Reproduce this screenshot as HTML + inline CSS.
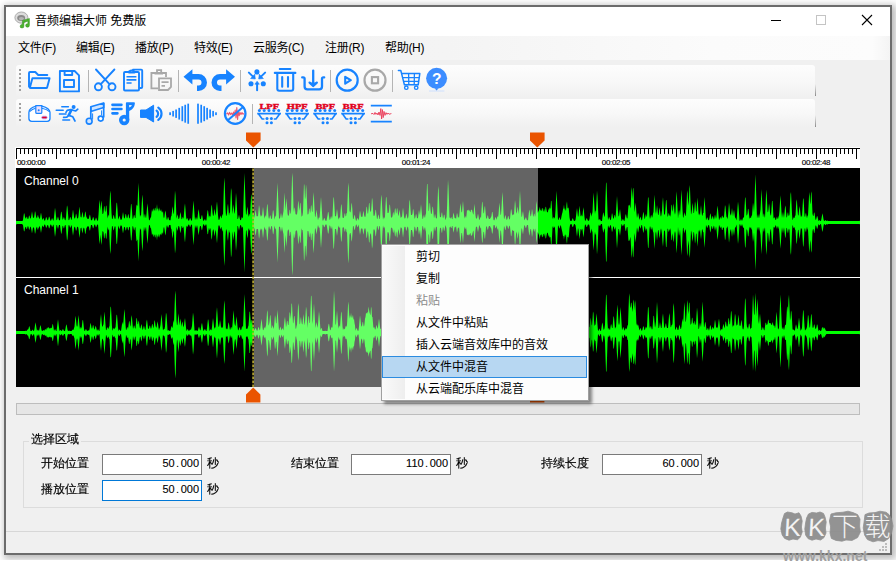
<!DOCTYPE html>
<html lang="zh-CN">
<head>
<meta charset="utf-8">
<title>音频编辑大师 免费版</title>
<style>
html,body{margin:0;padding:0}
body{width:896px;height:563px;overflow:hidden;background:#fff;position:relative;font-family:"Liberation Sans","Noto Sans CJK SC",sans-serif;font-size:12px;color:#000;line-height:1}
.abs{position:absolute;display:block}
.win{left:4px;top:5px;width:888px;height:550px;box-sizing:border-box;border:2px solid #6c6c6c;background:#f0f0f0;box-shadow:2px 2px 7px 2px rgba(0,0,0,.27)}
.title{left:6px;top:7px;width:884px;height:29px;background:#fff}
.ttext{left:35px;top:13px;height:16px;line-height:16px;white-space:nowrap}
.menubar{left:6px;top:36px;width:884px;height:24px;background:linear-gradient(to right,#f1f1f1 0,#f4f4f4 50%,#fbfbfb 80%,#fcfcfc 98%,#f4f4f4 100%)}
.mi{top:40px;height:16px;line-height:16px;white-space:nowrap;letter-spacing:-0.3px}
.tb{left:16px;width:799px;border-radius:3px;background:linear-gradient(to bottom,#fdfdfd 0,#f8f8f8 50%,#f0f0f0 100%)}
.ruler{left:15px;top:147px;width:845px;height:21px;background:#fff}
.ticks{left:16px;top:148px;width:841px;background-repeat:repeat-x}
.rl{top:158px;width:40px;margin-left:-20px;text-align:center;font-size:8px;line-height:10px;letter-spacing:-0.35px;color:#000;white-space:nowrap;-webkit-text-stroke:0.15px #000}
.sb{left:16px;top:403px;width:844px;height:12px;box-sizing:border-box;border:1px solid #bdbdbd;background:#e6e6e6}
.menu{left:381px;top:244px;width:208px;height:157px;box-sizing:border-box;border:1px solid #a0a0a0;background:#fdfdfd;box-shadow:3px 3px 3px rgba(0,0,0,.45)}
.gut{left:0px;top:1px;width:23px;height:153px;background:linear-gradient(to right,#fafafa,#eeeeee)}
.it{left:34px;height:22px;line-height:22px;white-space:nowrap}
.hl{left:0px;top:111px;width:205px;height:22px;box-sizing:border-box;border:1px solid #2b8be0;background:#b7d7f2}
.grp{left:23px;top:441px;width:840px;height:67px;box-sizing:border-box;border:1px solid #dcdcdc}
.sim{font-family:"Liberation Sans","WenQuanYi Zen Hei","Noto Sans CJK SC",sans-serif;font-size:12px;line-height:14px;white-space:nowrap;-webkit-text-stroke:0.18px #000}
.inp{width:100px;height:21px;box-sizing:border-box;border:1px solid #7a7a7a;background:#fff;text-align:right;padding-right:2px;font-family:"Liberation Sans",sans-serif;font-size:11px;line-height:17px;white-space:nowrap;-webkit-text-stroke:0.1px #000}
.inp i{display:inline-block;width:6px;text-align:center;font-style:normal}
.inp.f{border-color:#0078d7}
.stl{left:6px;top:531px;width:884px;height:1px;background:#d7d7d7}
.wm{color:#fff;font-family:"Liberation Sans","Noto Sans CJK SC",sans-serif;font-weight:bold;white-space:nowrap}
</style>
</head>
<body>
<div class="abs win"></div>
<div class="abs" style="left:0;top:560px;width:896px;height:3px;background:#fff"></div>
<div class="abs title"></div>
<div class="abs ttext">音频编辑大师 免费版</div>
<div class="abs menubar"></div>
<div class="abs mi" style="left:18px">文件(F)</div>
<div class="abs mi" style="left:76px">编辑(E)</div>
<div class="abs mi" style="left:135px">播放(P)</div>
<div class="abs mi" style="left:194px">特效(E)</div>
<div class="abs mi" style="left:253px">云服务(C)</div>
<div class="abs mi" style="left:325px">注册(R)</div>
<div class="abs mi" style="left:385px">帮助(H)</div>
<div class="abs tb" style="top:65px;height:32px"></div>
<div class="abs tb" style="top:99px;height:28px"></div>
<div class="abs" style="left:815px;top:84px;width:1px;height:12px;background:linear-gradient(to bottom,rgba(130,130,130,0),#8a8a8a)"></div>
<div class="abs" style="left:815px;top:115px;width:1px;height:12px;background:linear-gradient(to bottom,rgba(130,130,130,0),#8a8a8a)"></div>
<div class="abs ruler"></div>
<div class="abs" style="left:16px;top:148px;width:844px;height:1px;background:#000"></div>
<div class="abs ticks" style="height:6px;background-image:repeating-linear-gradient(to right,#000 0,#000 1px,transparent 1px,transparent 4px)"></div>
<div class="abs ticks" style="height:9px;background-image:repeating-linear-gradient(to right,#000 0,#000 1px,transparent 1px,transparent 20px)"></div>
<div class="abs ticks" style="height:11px;background-image:repeating-linear-gradient(to right,#000 0,#000 1px,transparent 1px,transparent 40px)"></div>
<div class="abs rl" style="left:31px;margin-left:-14px;text-align:left">00:00:00</div>
<div class="abs rl" style="left:216px">00:00:42</div>
<div class="abs rl" style="left:416px">00:01:24</div>
<div class="abs rl" style="left:616px">00:02:05</div>
<div class="abs rl" style="left:816px">00:02:48</div>
<svg class="abs" style="left:16px;top:168px" width="844" height="219" viewBox="0 0 844 219">
<rect x="0" y="0" width="844" height="219" fill="#000"/>
<rect x="238" y="0" width="284" height="219" fill="#646464"/>
<path fill="#00ff00" d="M0.0,52.5 0.5,53.1 6.0,53.1 6.5,52.9 7.0,52.0 7.5,48.3 8.0,45.2 8.5,45.7 9.0,49.0 9.5,50.2 10.0,50.7 10.5,48.7 11.0,48.7 11.5,50.8 12.0,51.2 12.5,50.2 13.0,47.8 13.5,47.5 14.0,49.9 14.5,50.8 15.0,49.4 15.5,46.5 16.0,43.2 16.5,46.3 17.0,49.7 18.0,49.7 18.5,46.7 19.0,42.9 19.5,44.5 20.0,48.4 20.5,49.7 21.0,50.6 21.5,48.0 22.0,46.8 22.5,49.2 23.0,49.6 23.5,51.1 24.0,50.4 24.5,47.3 25.0,44.4 25.5,47.3 26.0,50.6 26.5,52.1 27.0,50.5 27.5,50.0 28.0,51.5 28.5,52.8 29.0,52.8 29.5,51.2 30.0,49.3 30.5,49.2 31.0,51.0 31.5,52.2 32.0,52.2 32.5,50.6 33.0,48.6 33.5,49.0 34.0,51.0 34.5,52.8 35.0,52.8 35.5,51.5 36.0,50.0 36.5,50.7 37.0,52.2 37.5,52.8 38.0,49.2 38.5,44.2 39.0,39.7 39.5,43.0 40.0,47.9 40.5,52.2 41.0,52.1 41.5,50.1 42.0,48.4 42.5,50.2 43.0,52.2 43.5,52.2 44.0,52.2 44.5,48.1 45.0,44.3 45.5,43.4 46.0,47.1 46.5,51.4 47.0,51.6 47.5,49.7 48.0,49.0 48.5,50.8 49.0,52.2 49.5,52.2 50.0,49.5 50.5,43.0 51.0,37.3 51.5,39.0 52.0,44.9 52.5,52.0 53.0,52.2 53.5,51.2 54.0,49.3 54.5,49.0 55.0,50.9 55.5,52.2 56.0,49.7 56.5,45.4 57.0,41.5 57.5,44.9 58.0,49.1 58.5,50.5 59.0,50.5 59.5,48.5 60.0,45.6 60.5,46.7 61.0,49.7 61.5,50.5 62.0,50.5 62.5,48.0 63.0,42.8 63.5,38.6 64.0,43.3 64.5,48.5 65.0,49.4 65.5,49.3 66.0,45.7 66.5,43.6 67.0,47.0 67.5,49.4 68.0,49.4 68.5,48.3 69.0,44.5 69.5,43.2 70.0,46.9 70.5,49.4 71.0,49.6 71.5,50.9 72.5,50.9 73.0,50.1 73.5,47.4 74.0,46.6 74.5,49.2 75.0,52.2 76.0,52.2 76.5,50.7 77.0,48.9 77.5,49.6 78.0,51.5 78.5,52.8 79.0,52.8 79.5,51.1 80.0,49.6 80.5,50.6 81.0,52.3 81.5,52.8 82.0,52.8 82.5,46.8 83.0,38.8 83.5,31.8 84.0,36.1 84.5,42.8 85.0,35.4 85.5,32.6 86.0,39.6 86.5,46.0 87.0,46.0 87.5,44.4 88.0,38.7 88.5,38.0 89.0,43.7 89.5,43.4 90.0,37.5 90.5,37.9 91.0,43.8 91.5,50.5 92.0,47.9 92.5,46.6 93.0,49.1 93.5,36.8 94.0,26.0 94.5,22.5 95.0,33.0 95.5,45.0 96.0,51.1 96.5,51.1 97.0,49.3 97.5,46.7 98.0,47.7 98.5,50.3 99.0,51.1 99.5,50.5 100.0,42.2 100.5,35.2 101.0,34.4 101.5,41.3 102.0,49.3 102.5,51.7 103.0,49.6 103.5,47.5 104.0,49.4 104.5,51.7 105.5,51.7 106.0,50.6 106.5,47.2 107.0,44.1 107.5,46.8 108.0,50.2 108.5,50.5 109.0,49.2 109.5,46.3 110.0,46.1 110.5,49.1 111.0,50.5 111.5,49.6 112.0,46.7 112.5,46.1 113.0,49.0 113.5,50.5 114.0,49.9 114.5,42.4 115.0,36.0 115.5,36.3 116.0,42.8 116.5,50.5 117.0,51.1 117.5,49.3 118.0,46.8 118.5,47.6 119.0,50.3 119.5,49.7 120.0,42.6 120.5,36.6 121.0,37.7 121.5,37.5 122.0,24.6 122.5,14.7 123.0,26.5 123.5,39.7 124.0,49.2 124.5,46.7 125.0,48.1 125.5,40.0 126.0,30.6 126.5,26.5 127.0,35.4 127.5,45.6 128.0,50.3 128.5,47.3 129.0,45.6 129.5,48.4 130.0,50.5 130.5,46.0 131.0,39.7 131.5,35.2 132.0,41.0 132.5,47.5 133.0,52.2 133.5,52.2 134.0,51.3 134.5,49.5 135.0,49.4 136.0,41.0 136.5,42.9 137.0,43.7 137.5,40.1 138.0,41.7 138.5,43.0 139.0,39.5 139.5,40.2 140.0,43.2 140.5,40.8 141.0,35.9 141.5,41.4 142.0,40.1 142.5,41.9 143.0,43.7 143.5,39.2 144.0,42.3 144.5,43.3 145.0,41.1 145.5,42.9 146.0,44.6 146.5,44.2 147.0,42.8 147.5,48.8 148.0,50.6 148.5,48.3 149.0,44.3 149.5,42.4 150.0,46.2 150.5,50.6 151.0,52.2 151.5,50.6 152.0,48.8 152.5,49.8 153.0,51.7 153.5,52.2 154.5,52.2 155.0,48.6 155.5,48.0 156.0,43.3 156.5,38.3 157.0,41.2 157.5,46.6 158.0,44.5 158.5,32.8 159.0,22.6 159.5,26.9 160.0,37.7 160.5,50.7 161.0,48.5 161.5,46.2 162.0,48.6 162.5,51.1 163.0,51.1 163.5,49.6 164.0,46.2 164.5,44.1 165.0,47.3 165.5,50.9 166.0,51.2 166.5,49.3 167.0,49.2 167.5,51.1 168.0,45.3 168.5,38.9 169.0,35.2 169.5,41.2 170.0,47.9 170.5,51.8 171.0,50.2 171.5,50.2 172.0,51.8 172.5,52.8 173.0,52.8 173.5,51.6 174.0,50.1 174.5,50.5 175.0,52.1 175.5,52.8 176.0,52.6 176.5,45.9 177.0,38.7 177.5,32.4 178.0,38.7 178.5,45.9 179.0,52.2 179.5,50.5 180.0,48.7 180.5,50.2 181.0,52.1 181.5,49.8 182.0,45.2 182.5,41.1 183.0,43.8 183.5,48.3 184.0,51.1 184.5,51.1 185.0,50.7 185.5,48.1 186.0,46.7 186.5,49.1 187.0,51.9 187.5,53.1 188.0,52.6 188.5,51.5 189.0,51.1 189.5,52.3 190.0,53.1 190.5,51.8 191.0,46.7 191.5,42.5 192.0,42.3 192.5,46.6 193.0,49.9 193.5,47.5 194.0,47.9 194.5,49.1 195.0,42.3 195.5,36.4 196.0,38.3 196.5,44.5 197.0,47.7 197.5,47.7 198.0,45.0 198.5,40.8 199.0,43.4 199.5,47.7 200.0,45.0 200.5,38.0 201.0,33.2 201.5,39.6 202.0,46.9 202.5,51.7 203.0,51.7 203.5,51.4 204.0,49.1 204.5,47.3 205.0,49.5 205.5,50.4 206.0,47.5 206.5,45.8 207.0,48.5 207.5,30.7 208.0,15.5 208.5,9.4 209.0,23.8 209.5,40.3 210.0,47.9 210.5,47.4 211.0,44.9 211.5,38.5 212.0,35.6 212.5,41.6 213.0,47.8 213.5,44.6 214.0,45.0 214.5,31.6 215.0,20.1 215.5,22.5 216.0,34.3 216.5,46.0 217.0,41.7 217.5,36.3 218.0,40.8 218.5,46.0 219.0,44.1 219.5,33.9 220.0,24.8 220.5,31.0 221.0,40.7 221.5,51.1 222.0,51.1 222.5,48.9 223.0,46.6 223.5,48.9 224.0,51.4 224.5,52.2 225.0,51.9 225.5,49.9 226.0,48.5 226.5,50.3 227.0,49.9 227.5,34.1 228.0,18.1 228.5,5.1 229.0,19.5 229.5,35.7 230.0,46.6 230.5,46.6 231.0,41.6 231.5,38.6 232.0,43.5 232.5,49.1 233.0,46.8 233.5,45.6 234.0,48.5 234.5,38.1 235.0,28.4 235.5,26.1 236.0,35.6 236.5,46.5 237.0,46.6 237.5,43.9 238.0,47.1 L238.0,62.2 237.5,65.4 237.0,62.7 236.5,63.5 236.0,75.5 235.5,85.9 235.0,83.4 234.5,72.7 234.0,60.3 233.5,63.0 233.0,61.8 232.5,60.1 232.0,65.7 231.5,70.6 231.0,67.6 230.5,62.6 230.0,62.6 229.5,73.6 229.0,89.9 228.5,104.5 228.0,91.3 227.5,75.2 227.0,59.3 226.5,58.6 226.0,60.4 225.5,59.1 225.0,57.2 224.5,57.0 224.0,57.8 223.5,60.4 223.0,62.7 222.5,60.4 222.0,58.1 221.5,58.1 221.0,67.8 220.5,77.2 220.0,83.0 219.5,74.4 219.0,64.6 218.5,63.2 218.0,68.2 217.5,72.6 217.0,67.3 216.5,63.2 216.0,75.1 215.5,87.0 215.0,89.5 214.5,77.8 214.0,64.3 213.5,64.7 213.0,61.5 212.5,67.2 212.0,72.9 211.5,70.1 211.0,64.0 210.5,61.8 210.0,61.2 209.5,68.3 209.0,84.1 208.5,97.9 208.0,92.0 207.5,77.5 207.0,60.9 206.5,63.7 206.0,61.9 205.5,59.0 205.0,59.4 204.5,61.4 204.0,59.8 203.5,57.6 203.0,57.5 202.5,57.5 202.0,62.0 201.5,69.0 201.0,75.2 200.5,70.6 200.0,63.9 199.5,61.5 199.0,65.8 198.5,68.5 198.0,64.2 197.5,61.5 197.0,61.5 196.5,64.1 196.0,69.9 195.5,71.8 195.0,66.2 194.5,59.8 194.0,61.5 193.5,61.9 193.0,59.4 192.5,62.2 192.0,66.2 191.5,66.1 191.0,62.0 190.5,57.3 190.0,56.1 189.5,56.9 189.0,58.1 188.5,57.7 188.0,56.5 187.5,56.1 187.0,57.3 186.5,60.1 186.0,62.6 185.5,61.2 185.0,58.5 184.5,58.1 184.0,58.1 183.5,60.5 183.0,64.6 182.5,67.2 182.0,63.3 181.5,59.0 181.0,57.1 180.5,59.1 180.0,60.5 179.5,58.8 179.0,57.0 178.5,63.5 178.0,70.8 177.5,77.3 177.0,70.8 176.5,63.5 176.0,56.7 175.5,56.4 175.0,57.1 174.5,58.6 174.0,59.0 173.5,57.6 173.0,56.4 172.5,56.4 172.0,57.4 171.5,58.8 171.0,58.8 170.5,57.4 170.0,61.4 169.5,68.3 169.0,74.4 168.5,70.7 168.0,64.1 167.5,58.2 167.0,60.1 166.5,60.1 166.0,58.1 165.5,58.3 165.0,61.9 164.5,65.2 164.0,63.1 163.5,59.6 163.0,58.1 162.5,58.1 162.0,60.6 161.5,63.0 161.0,60.7 160.5,58.4 160.0,71.0 159.5,81.4 159.0,85.6 158.5,75.7 158.0,64.4 157.5,62.6 157.0,67.8 156.5,70.6 156.0,65.7 155.5,61.2 155.0,60.6 154.5,57.0 153.5,57.0 153.0,57.3 152.5,59.2 152.0,60.1 151.5,58.4 151.0,57.0 150.5,58.8 150.0,63.5 149.5,67.6 149.0,65.6 148.5,61.3 148.0,58.7 147.5,60.5 147.0,66.4 146.5,65.0 146.0,64.3 145.5,66.3 145.0,67.5 144.5,65.4 144.0,66.9 143.5,70.1 143.0,65.6 142.5,67.7 142.0,69.6 141.5,67.3 141.0,72.5 140.5,67.8 140.0,66.0 139.5,69.1 139.0,69.7 138.5,66.2 138.0,67.5 137.5,69.2 137.0,65.5 136.5,66.3 136.0,67.5 135.5,63.5 135.0,60.2 134.5,60.0 134.0,58.1 133.5,57.0 133.0,57.0 132.5,62.3 132.0,69.4 131.5,75.7 131.0,70.8 130.5,64.0 130.0,58.7 129.5,60.6 129.0,63.2 128.5,61.6 128.0,58.7 127.5,63.8 127.0,74.2 126.5,83.3 126.0,79.1 125.5,69.5 125.0,60.8 124.5,62.0 124.0,59.7 123.5,69.1 123.0,82.0 122.5,93.5 122.0,83.9 121.5,71.3 121.0,72.4 120.5,73.5 120.0,67.2 119.5,59.8 119.0,59.0 118.5,61.7 118.0,62.5 117.5,59.9 117.0,58.1 116.5,58.6 116.0,65.9 115.5,72.2 115.0,72.5 114.5,66.3 114.0,59.1 113.5,58.7 113.0,59.9 112.5,62.6 112.0,62.0 111.5,59.3 111.0,58.7 110.5,59.7 110.0,62.4 109.5,62.2 109.0,59.5 108.5,58.7 108.0,59.2 107.5,62.8 107.0,65.6 106.5,62.4 106.0,58.8 105.5,57.5 104.5,57.5 104.0,59.6 103.5,61.5 103.0,59.5 102.5,57.5 102.0,60.3 101.5,68.9 101.0,76.3 100.5,75.5 100.0,67.9 99.5,59.0 99.0,58.1 98.5,58.9 98.0,61.6 97.5,62.6 97.0,60.0 96.5,58.1 96.0,58.1 95.5,64.0 95.0,75.7 94.5,86.0 94.0,82.6 93.5,72.0 93.0,60.0 92.5,62.4 92.0,61.2 91.5,58.6 91.0,64.9 90.5,70.5 90.0,70.8 89.5,65.2 89.0,65.2 88.5,70.6 88.0,70.0 87.5,64.4 87.0,63.2 86.5,63.2 86.0,69.7 85.5,76.9 85.0,74.0 84.5,66.6 84.0,72.1 83.5,76.2 83.0,69.6 82.5,62.0 82.0,56.4 81.5,56.4 81.0,57.0 80.5,58.6 80.0,59.6 79.5,58.1 79.0,56.4 78.5,56.4 78.0,57.7 77.5,59.7 77.0,60.5 76.5,58.6 76.0,57.0 75.5,57.0 75.0,57.0 74.5,60.1 74.0,62.8 73.5,62.0 73.0,59.2 72.5,58.3 71.5,58.3 71.0,59.6 70.5,59.8 70.0,62.4 69.5,66.2 69.0,65.0 68.5,61.0 68.0,59.8 67.5,59.8 67.0,62.1 66.5,65.5 66.0,63.4 65.5,59.8 65.0,59.8 64.5,60.5 64.0,65.5 63.5,70.0 63.0,66.0 62.5,61.0 62.0,58.7 61.5,58.7 61.0,59.3 60.5,62.1 60.0,63.1 59.5,60.4 59.0,58.7 58.5,58.7 58.0,60.1 57.5,64.4 57.0,67.8 56.5,63.9 56.0,59.6 55.5,57.0 55.0,58.1 54.5,59.8 54.0,59.5 53.5,57.7 53.0,57.0 52.5,57.4 52.0,64.8 51.5,71.0 51.0,72.8 50.5,66.8 50.0,60.0 49.5,57.0 49.0,57.0 48.5,58.5 48.0,60.4 47.5,59.7 47.0,57.7 46.5,57.9 46.0,62.2 45.5,66.0 45.0,65.1 44.5,61.2 44.0,57.0 43.5,57.0 43.0,57.1 42.5,59.1 42.0,60.9 41.5,59.2 41.0,57.1 40.5,57.0 40.0,61.1 39.5,65.7 39.0,68.9 38.5,64.6 38.0,59.8 37.5,56.4 37.0,56.9 36.5,58.4 36.0,59.0 35.5,57.6 35.0,56.4 34.5,56.4 34.0,58.1 33.5,60.1 33.0,60.5 32.5,58.5 32.0,57.0 31.5,57.0 31.0,58.0 30.5,59.7 30.0,59.6 29.5,57.8 29.0,56.4 28.5,56.4 28.0,57.8 27.5,59.3 27.0,58.7 26.5,57.2 26.0,58.7 25.5,62.0 25.0,65.0 24.5,62.0 24.0,58.8 23.5,58.1 23.0,59.6 22.5,59.7 22.0,62.1 21.5,60.9 21.0,58.4 20.5,59.5 20.0,60.6 19.5,64.3 19.0,65.9 18.5,62.3 18.0,59.5 17.0,59.5 16.5,62.5 16.0,65.4 15.5,62.3 15.0,59.8 14.5,58.4 14.0,59.3 13.5,61.7 13.0,61.4 12.5,59.0 12.0,58.0 11.5,58.7 11.0,61.0 10.5,61.0 10.0,58.8 9.5,59.0 9.0,59.9 8.5,63.0 8.0,63.5 7.5,60.5 7.0,57.0 6.5,56.4 6.0,56.1 1.0,56.1 0.5,56.2 0.0,56.8Z"/><path fill="#64ff64" d="M238.0,47.1 238.5,50.0 239.0,45.7 239.5,41.7 240.0,43.9 240.5,48.2 241.0,48.3 242.0,48.3 242.5,42.5 243.0,37.0 243.5,39.7 244.0,45.6 244.5,48.9 245.0,46.5 245.5,48.1 246.0,48.6 246.5,43.3 247.0,38.7 247.5,42.7 248.0,47.9 248.5,50.7 249.0,48.2 249.5,47.0 250.0,49.4 250.5,44.0 251.0,37.6 251.5,35.7 252.0,41.9 252.5,49.0 253.0,51.1 253.5,50.0 254.0,47.4 254.5,47.4 255.0,49.9 255.5,51.1 256.0,51.0 256.5,46.1 257.0,41.9 257.5,42.9 258.0,47.2 258.5,51.7 259.0,49.4 259.5,47.2 260.0,49.1 260.5,38.2 261.0,25.3 261.5,14.4 262.0,26.0 262.5,39.1 263.0,50.5 264.0,50.5 264.5,47.6 265.0,44.8 265.5,47.6 266.0,50.5 266.5,48.0 267.0,45.9 267.5,43.1 268.0,33.3 268.5,24.6 269.0,32.7 269.5,42.4 270.0,36.2 270.5,29.9 271.0,37.2 271.5,45.3 272.0,47.7 272.5,47.7 273.0,46.7 273.5,42.3 274.0,41.6 274.5,46.0 275.0,44.9 275.5,26.6 276.0,9.8 276.5,4.8 277.0,21.1 277.5,39.9 278.0,44.3 278.5,39.2 279.0,40.7 279.5,46.0 280.0,46.6 281.0,46.6 281.5,42.5 282.0,35.0 282.5,32.4 283.0,39.6 283.5,42.7 284.0,35.8 284.5,34.6 285.0,41.3 285.5,49.1 286.0,47.7 286.5,47.7 287.0,43.9 287.5,28.7 288.0,15.6 288.5,18.0 289.0,31.4 289.5,28.7 290.0,16.3 290.5,20.8 291.0,33.7 291.5,46.2 292.0,46.6 292.5,45.8 293.0,40.9 293.5,40.3 294.0,45.2 294.5,43.3 295.0,37.3 295.5,37.7 296.0,43.7 296.5,43.8 297.0,33.2 297.5,23.9 298.0,30.2 298.5,40.3 299.0,48.8 299.5,48.8 300.0,45.4 300.5,41.6 301.0,45.2 301.5,49.4 302.0,52.2 302.5,50.6 303.0,48.9 303.5,50.3 304.0,44.4 304.5,36.1 305.0,28.7 305.5,36.1 306.0,44.4 306.5,52.3 307.0,52.8 307.5,51.9 308.0,50.3 308.5,49.9 309.0,51.4 309.5,52.8 310.5,52.8 311.0,50.1 311.5,47.6 312.0,44.0 312.5,44.3 313.5,51.7 314.0,51.7 314.5,50.2 315.0,48.1 315.5,48.9 316.0,51.1 316.5,47.4 317.0,37.3 317.5,28.7 318.0,30.5 319.0,48.3 320.0,48.3 320.5,44.8 321.0,40.8 321.5,44.6 322.0,49.0 322.5,51.7 323.0,49.9 323.5,49.1 324.0,50.9 324.5,43.9 325.0,37.6 325.5,36.1 326.0,42.3 326.5,49.3 327.0,50.0 327.5,50.0 328.0,49.2 328.5,45.9 329.0,44.9 329.5,48.1 330.0,48.6 330.5,45.3 331.0,44.9 331.5,32.8 332.0,19.3 332.5,14.6 333.0,27.5 333.5,42.4 334.0,44.3 334.5,44.3 335.0,41.1 335.5,34.6 336.0,36.7 336.5,43.5 337.0,51.1 337.5,51.1 338.0,49.0 338.5,46.5 339.0,48.0 339.5,50.7 340.0,52.8 340.5,52.7 341.0,51.1 341.5,49.7 342.0,51.0 342.5,52.6 343.0,50.2 343.5,46.0 344.0,42.4 344.5,45.1 345.0,48.8 346.0,48.8 346.5,48.7 347.0,44.8 347.5,42.8 348.0,46.5 348.5,48.8 349.5,48.8 350.0,44.0 350.5,38.6 351.0,39.5 351.5,45.0 352.0,46.0 352.5,41.9 353.0,35.1 353.5,35.3 354.0,42.1 354.5,43.7 355.0,43.7 355.5,37.7 356.0,29.4 356.5,31.9 357.0,40.5 357.5,47.7 358.5,47.7 359.0,45.8 359.5,41.4 360.0,42.4 360.5,46.9 361.0,51.1 361.5,50.7 362.0,48.0 362.5,46.3 363.0,48.8 363.5,51.1 364.0,51.0 364.5,39.5 365.0,30.0 365.5,26.4 366.0,35.5 366.5,45.9 367.0,51.8 367.5,49.9 368.0,49.0 368.5,50.7 369.0,48.2 369.5,37.8 370.0,29.0 370.5,29.5 371.0,38.4 371.5,44.9 372.5,44.9 373.0,43.1 373.5,36.8 374.0,36.8 374.5,43.1 375.0,49.4 376.0,49.4 376.5,48.1 377.0,44.5 377.5,44.2 378.0,47.8 378.5,45.1 379.0,40.3 379.5,40.8 380.0,45.8 380.5,44.6 381.0,39.8 381.5,41.3 382.0,46.3 382.5,48.3 383.0,45.4 383.5,41.6 384.0,45.1 384.5,49.3 385.0,50.0 385.5,48.4 386.0,48.9 386.5,44.0 387.0,39.5 387.5,43.4 388.0,48.3 388.5,50.5 389.0,50.5 389.5,49.8 390.0,46.8 390.5,45.6 391.0,48.5 391.5,50.5 392.0,50.5 392.5,47.8 393.0,39.0 393.5,31.4 394.0,33.7 394.5,41.6 395.0,47.1 396.0,47.1 396.5,45.4 397.0,40.8 397.5,41.9 398.0,46.6 398.5,50.5 399.0,50.5 399.5,48.5 400.0,45.7 400.5,47.1 401.0,50.1 401.5,50.5 402.0,49.8 402.5,45.5 403.0,41.7 403.5,44.8 404.0,47.3 404.5,41.3 405.0,35.9 405.5,41.3 406.0,47.3 406.5,51.1 407.0,50.8 407.5,48.2 408.0,46.4 408.5,48.9 409.0,50.1 409.5,47.1 410.0,45.4 410.5,29.6 411.0,16.1 411.5,16.1 412.0,29.6 412.5,43.2 413.0,42.6 413.5,35.7 414.0,34.7 414.5,41.4 415.0,46.0 415.5,46.0 416.0,44.0 416.5,38.6 417.0,39.2 417.5,44.8 418.0,50.5 418.5,48.4 419.0,45.8 419.5,47.7 420.0,50.5 420.5,50.5 421.0,49.6 421.5,34.6 422.0,22.3 422.5,18.0 423.0,29.8 423.5,43.4 424.0,49.4 424.5,49.0 425.0,49.0 425.5,45.5 426.0,44.1 426.5,47.4 427.0,50.5 427.5,49.2 428.0,46.4 428.5,46.9 429.0,49.7 429.5,52.2 430.0,50.6 430.5,48.9 431.0,40.2 431.5,25.0 432.0,11.6 432.5,19.0 433.0,33.2 433.5,49.7 434.0,49.6 434.5,50.7 435.0,49.2 435.5,49.3 436.0,51.2 436.5,51.0 437.0,47.5 437.5,44.4 438.0,46.5 438.5,49.8 439.0,50.0 439.5,50.0 440.0,51.2 440.5,47.7 441.0,44.7 441.5,46.5 442.0,49.8 442.5,48.4 443.0,50.2 443.5,45.3 444.0,38.9 444.5,35.0 445.0,41.0 445.5,44.3 446.0,44.3 446.5,38.1 447.0,32.8 447.5,39.3 448.0,46.6 448.5,50.8 449.0,48.6 449.5,48.2 450.0,50.2 450.5,47.3 451.0,41.8 451.5,42.8 452.0,42.1 452.5,41.6 453.0,43.4 453.5,41.8 454.0,43.7 454.5,44.3 455.0,41.4 455.5,42.0 456.0,41.7 456.5,44.0 457.0,45.8 457.5,46.8 458.0,40.7 458.5,35.7 459.0,41.2 459.5,47.4 460.0,50.5 461.0,50.5 462.0,45.4 462.5,48.1 463.0,51.0 463.5,52.2 464.0,50.4 464.5,48.6 465.0,50.2 465.5,41.9 466.0,34.7 466.5,33.6 467.0,40.7 467.5,45.4 468.0,45.1 468.5,39.4 469.0,37.7 469.5,43.2 470.0,49.6 470.5,51.1 471.0,50.0 471.5,47.5 472.0,47.4 472.5,49.9 473.0,51.1 474.0,51.1 474.5,49.7 475.0,49.5 475.5,47.7 476.0,44.1 476.5,44.1 477.0,47.7 477.5,52.1 478.0,52.2 478.5,52.2 479.0,50.6 479.5,48.8 480.0,50.1 480.5,52.0 481.0,49.7 481.5,47.7 482.0,49.5 482.5,46.3 483.0,39.8 483.5,34.6 484.0,40.4 484.5,47.0 485.0,46.5 485.5,39.9 486.0,29.8 486.5,24.0 487.0,33.4 487.5,44.1 488.0,51.1 488.5,50.4 489.0,47.9 489.5,47.1 490.0,49.5 490.5,51.7 491.0,51.7 491.5,50.5 492.0,48.2 492.5,48.1 493.0,50.4 493.5,51.7 494.0,50.8 494.5,45.6 495.0,41.0 495.5,42.0 496.0,45.9 496.5,47.4 497.0,46.6 497.5,46.2 498.0,46.9 498.5,38.9 499.0,31.9 499.5,36.0 500.0,43.5 500.5,45.8 501.0,43.7 501.5,38.6 502.0,40.8 502.5,46.1 503.0,41.5 503.5,31.2 504.0,22.5 504.5,31.8 505.0,42.3 505.5,48.8 506.0,48.8 506.5,45.2 507.0,42.9 507.5,46.5 508.0,50.5 508.5,52.2 509.0,51.6 509.5,49.8 510.0,49.2 510.5,50.9 511.0,52.2 512.0,52.2 512.5,47.6 513.0,43.2 513.5,41.4 514.0,45.6 514.5,48.3 515.0,48.3 515.5,45.1 516.0,40.8 516.5,43.4 517.0,48.0 517.5,48.8 518.0,45.7 518.5,45.8 519.0,48.9 519.5,47.0 520.0,39.4 520.5,32.7 521.0,37.0 521.5,44.2 522.0,44.7 L522.0,64.5 521.5,64.3 521.0,71.1 520.5,75.2 520.0,68.9 519.5,61.7 519.0,60.4 518.5,63.5 518.0,63.6 517.5,60.5 517.0,61.6 516.5,66.5 516.0,69.2 515.5,64.7 515.0,60.9 514.5,60.9 514.0,63.6 513.5,67.8 513.0,66.0 512.5,61.6 512.0,57.0 511.0,57.0 510.5,58.5 510.0,60.3 509.5,59.6 509.0,57.7 508.5,57.0 508.0,58.7 507.5,62.8 507.0,66.4 506.5,64.1 506.0,60.4 505.5,60.4 505.0,66.2 504.5,76.0 504.0,84.8 503.5,76.6 503.0,66.9 502.5,63.3 502.0,68.8 501.5,71.0 501.0,65.8 500.5,63.4 500.0,66.3 499.5,74.1 499.0,78.4 498.5,71.1 498.0,62.7 497.5,63.0 497.0,62.6 496.5,61.8 496.0,63.3 495.5,67.5 495.0,68.5 494.5,63.8 494.0,58.5 493.5,57.5 493.0,58.7 492.5,60.8 492.0,60.7 491.5,58.5 491.0,57.5 490.5,57.5 490.0,59.8 489.5,62.3 489.0,61.5 488.5,58.9 488.0,58.1 487.5,64.8 487.0,75.2 486.5,84.4 486.0,78.8 485.5,69.0 485.0,63.0 484.5,62.3 484.0,69.0 483.5,74.9 483.0,69.5 482.5,63.0 482.0,60.1 481.5,62.1 481.0,59.9 480.5,57.4 480.0,59.4 479.5,60.6 478.5,57.0 478.0,57.0 477.5,57.2 477.0,61.6 476.5,65.4 476.0,65.4 475.5,61.6 475.0,59.7 474.5,59.5 474.0,58.1 473.0,58.1 472.5,59.2 472.0,61.7 471.5,61.6 471.0,59.1 470.5,58.1 470.0,59.5 469.5,65.7 469.0,71.2 468.5,69.5 468.0,63.9 467.5,63.8 467.0,68.1 466.5,74.9 466.0,73.9 465.5,66.9 465.0,59.2 464.5,60.8 464.0,59.0 463.5,57.0 463.0,58.3 462.5,61.4 462.0,64.2 461.5,61.5 461.0,58.7 460.0,58.7 459.5,62.0 459.0,68.3 458.5,74.0 458.0,68.9 457.5,62.6 457.0,63.4 456.5,65.2 456.0,67.5 455.5,67.2 455.0,68.3 454.5,64.9 454.0,65.5 453.5,67.4 453.0,65.8 452.5,67.6 452.0,67.1 451.5,66.4 451.0,67.4 450.5,61.9 450.0,59.0 449.5,61.1 449.0,60.7 448.5,58.5 448.0,62.3 447.5,69.3 447.0,75.5 446.5,70.5 446.0,64.9 445.5,64.9 445.0,69.1 444.5,75.5 444.0,71.4 443.5,64.5 443.0,58.7 442.5,60.4 442.0,59.5 441.5,62.8 441.0,64.7 440.5,61.6 440.0,58.1 439.5,59.2 439.0,59.2 438.5,59.3 438.0,62.6 437.5,64.7 437.0,61.6 436.5,58.1 436.0,58.0 435.5,59.9 435.0,60.1 434.5,58.2 434.0,59.3 433.5,59.2 433.0,74.8 432.5,88.3 432.0,95.3 431.5,82.6 431.0,68.2 430.5,60.6 430.0,58.8 429.5,57.0 429.0,59.5 428.5,62.4 428.0,62.9 427.5,60.1 427.0,58.7 426.5,61.8 426.0,65.2 425.5,63.7 425.0,60.2 424.5,60.0 424.0,59.6 423.5,66.2 423.0,80.3 422.5,92.6 422.0,88.1 421.5,75.3 421.0,59.7 420.5,58.7 420.0,58.7 419.5,61.4 419.0,63.4 418.5,60.7 418.0,58.7 417.5,64.7 417.0,70.4 416.5,71.1 416.0,65.4 415.5,63.2 415.0,63.2 414.5,68.1 414.0,75.1 413.5,74.0 413.0,67.0 412.5,66.0 412.0,80.1 411.5,93.8 411.0,93.8 410.5,80.1 410.0,64.0 409.5,61.7 409.0,58.9 408.5,60.2 408.0,62.6 407.5,60.9 407.0,58.3 406.5,58.1 406.0,61.4 405.5,66.9 405.0,71.9 404.5,66.9 404.0,61.4 403.5,64.1 403.0,67.1 402.5,63.4 402.0,59.2 401.5,58.7 401.0,59.2 400.5,62.2 400.0,63.7 399.5,60.8 399.0,58.7 398.5,58.7 398.0,63.2 397.5,68.2 397.0,69.4 396.5,64.5 396.0,62.1 395.0,62.1 394.5,68.7 394.0,77.3 393.5,79.8 393.0,71.5 392.5,62.0 392.0,58.7 391.5,58.7 391.0,60.3 390.5,63.0 390.0,61.9 389.5,59.1 389.0,58.7 388.5,58.7 388.0,60.9 387.5,65.8 387.0,69.7 386.5,65.2 386.0,60.3 385.5,60.3 385.0,58.9 384.5,60.0 384.0,64.2 383.5,67.8 383.0,64.0 382.5,60.9 382.0,63.3 381.5,68.6 381.0,70.2 380.5,65.1 380.0,63.3 379.5,68.1 379.0,68.7 378.5,63.9 378.0,61.3 377.5,64.8 377.0,64.6 376.5,61.1 376.0,59.8 375.0,59.8 374.5,66.4 374.0,72.8 373.5,72.8 373.0,66.4 372.5,64.3 371.5,64.3 371.0,71.9 370.5,81.5 370.0,82.0 369.5,72.6 369.0,61.5 368.5,58.5 368.0,60.3 367.5,59.3 367.0,57.4 366.5,63.3 366.0,73.5 365.5,82.5 365.0,78.9 364.5,69.6 364.0,58.1 363.5,58.1 363.0,60.1 362.5,62.5 362.0,60.8 361.5,58.3 361.0,58.1 360.5,62.6 360.0,67.3 359.5,68.4 359.0,63.8 358.5,61.5 357.5,61.5 357.0,69.3 356.5,78.1 356.0,80.7 355.5,72.1 355.0,65.5 354.5,65.5 354.0,67.3 353.5,74.2 353.0,74.4 352.5,67.5 352.0,63.2 351.5,63.9 351.0,69.3 350.5,70.3 350.0,65.0 349.5,60.4 348.5,60.4 348.0,62.9 347.5,66.7 347.0,64.7 346.5,60.7 346.0,60.4 345.0,60.4 344.5,64.3 344.0,67.1 343.5,63.3 343.0,59.1 342.5,56.6 342.0,58.2 341.5,59.5 341.0,58.1 340.5,56.5 340.0,56.4 339.5,58.4 339.0,61.1 338.5,62.6 338.0,60.1 337.5,58.1 337.0,58.1 336.5,65.3 336.0,71.8 335.5,73.8 335.0,67.6 334.5,64.9 334.0,64.9 333.5,67.1 333.0,82.3 332.5,95.6 332.0,90.7 331.5,76.9 331.0,64.4 330.5,64.0 330.0,60.6 329.5,60.9 329.0,64.0 328.5,63.0 328.0,59.9 327.5,59.2 327.0,59.2 326.5,60.1 326.0,67.5 325.5,73.9 325.0,72.4 324.5,65.8 324.0,58.4 323.5,60.1 323.0,59.4 322.5,57.5 322.0,60.1 321.5,64.4 321.0,68.1 320.5,64.2 320.0,60.9 319.0,60.9 318.5,70.3 318.0,79.4 317.5,81.3 317.0,72.4 316.5,62.1 316.0,58.1 315.5,60.3 315.0,61.1 314.5,59.0 314.0,57.5 313.5,57.5 313.0,61.5 312.5,65.3 312.0,65.7 311.5,61.9 311.0,59.1 310.5,56.4 309.5,56.4 309.0,57.7 308.5,59.3 308.0,58.9 307.5,57.3 307.0,56.4 306.5,56.9 306.0,64.7 305.5,73.0 305.0,80.3 304.5,73.0 304.0,64.7 303.5,59.0 303.0,60.3 302.5,58.6 302.0,57.0 301.5,59.4 301.0,63.3 300.5,66.6 300.0,63.1 299.5,60.4 299.0,60.4 298.5,69.0 298.0,79.1 297.5,85.5 297.0,76.1 296.5,65.5 296.0,65.8 295.5,72.0 295.0,72.3 294.5,66.2 294.0,64.2 293.5,69.2 293.0,68.6 292.5,63.6 292.0,62.8 291.5,63.2 291.0,73.9 290.5,85.8 290.0,89.9 289.5,78.5 289.0,77.6 288.5,90.8 288.0,93.2 287.5,80.2 287.0,65.2 286.5,62.0 286.0,62.0 285.5,60.2 285.0,68.3 284.5,75.2 284.0,74.0 283.5,66.9 283.0,69.4 282.5,76.5 282.0,73.9 281.5,66.5 281.0,62.6 280.0,62.6 279.5,63.5 279.0,68.9 278.5,70.5 278.0,65.3 277.5,70.2 277.0,90.1 276.5,107.5 276.0,102.2 275.5,84.3 275.0,64.0 274.5,63.7 274.0,68.3 273.5,67.6 273.0,62.9 272.5,61.5 272.0,61.5 271.5,63.8 271.0,71.8 270.5,79.0 270.0,72.7 269.5,67.0 269.0,76.7 268.5,85.0 268.0,76.2 267.5,66.3 267.0,64.0 266.5,61.7 266.0,58.7 265.5,61.4 265.0,64.1 264.5,61.4 264.0,58.7 263.0,58.7 262.5,70.0 262.0,83.1 261.5,94.7 261.0,83.8 260.5,70.9 260.0,60.0 259.5,61.8 259.0,59.7 258.5,57.5 258.0,61.4 257.5,65.4 257.0,66.4 256.5,62.5 256.0,58.1 255.5,58.1 255.0,59.2 254.5,61.6 254.0,61.6 253.5,59.1 253.0,58.1 252.5,60.1 252.0,67.1 251.5,73.1 251.0,71.3 250.5,65.0 250.0,59.8 249.5,62.2 249.0,61.0 248.5,58.5 248.0,61.2 247.5,66.3 247.0,70.3 246.5,65.7 246.0,60.5 245.5,61.1 245.0,62.8 244.5,60.3 244.0,63.0 243.5,68.5 243.0,71.0 242.5,65.8 242.0,60.9 241.0,60.9 240.5,61.3 240.0,65.8 239.5,68.1 239.0,63.9 238.5,59.2 238.0,62.2Z"/><path fill="#00ff00" d="M522.0,44.7 522.5,43.1 523.0,42.3 523.5,38.4 524.0,41.8 524.5,42.8 525.0,40.0 525.5,43.3 526.0,42.3 526.5,39.9 527.0,40.3 527.5,43.2 528.0,43.5 528.5,40.3 529.0,44.6 529.5,39.0 530.0,38.7 530.5,41.8 531.0,43.9 531.5,44.6 532.0,43.7 532.5,40.5 533.0,42.2 533.5,39.3 534.0,40.4 534.5,40.4 535.0,32.8 535.5,33.3 536.0,40.9 536.5,49.8 537.0,51.1 537.5,49.2 538.0,49.0 538.5,50.7 539.0,48.9 539.5,42.2 540.0,31.9 540.5,22.7 541.0,31.6 541.5,41.8 542.0,51.7 542.5,52.0 543.0,50.2 543.5,48.9 544.0,50.6 544.5,52.2 545.0,51.1 545.5,48.3 546.0,46.1 546.5,44.2 547.0,41.3 547.5,40.3 548.0,36.4 548.5,41.9 549.0,39.8 549.5,42.1 550.0,43.0 550.5,36.2 551.0,33.3 551.5,40.1 552.0,40.5 552.5,39.2 553.0,42.7 553.5,49.2 554.0,52.1 554.5,52.9 555.0,53.1 555.5,53.1 556.0,51.8 556.5,50.3 557.0,50.5 557.5,52.0 558.0,53.1 558.5,53.1 559.0,52.7 559.5,51.9 560.0,48.5 560.5,43.7 561.0,39.9 561.5,44.2 562.0,49.0 562.5,47.7 563.0,42.6 563.5,37.7 564.0,42.3 564.5,47.7 565.0,48.4 565.5,46.3 566.0,48.7 566.5,47.4 567.0,42.4 567.5,39.2 568.0,43.9 568.5,49.2 569.0,52.8 569.5,52.8 570.0,51.7 570.5,50.2 571.0,50.2 571.5,51.8 572.0,52.8 573.0,52.8 573.5,51.1 574.0,47.6 574.5,44.3 575.0,45.6 575.5,48.7 576.0,46.2 576.5,44.0 577.0,33.6 577.5,24.5 578.0,30.7 578.5,40.6 579.0,45.9 579.5,42.3 580.0,43.6 580.5,32.4 581.0,22.6 581.5,28.6 582.0,39.2 582.5,51.1 583.0,52.6 583.5,51.3 584.0,51.0 584.5,52.2 585.0,53.1 586.0,53.1 586.5,48.9 587.0,45.4 587.5,44.2 588.0,47.6 588.5,49.3 589.0,46.0 589.5,29.5 590.0,15.5 590.5,14.3 591.0,28.1 591.5,44.2 592.0,51.9 592.5,50.9 593.0,49.0 593.5,49.4 594.0,51.3 594.5,52.2 595.0,51.6 595.5,48.1 596.0,45.1 596.5,46.5 597.0,49.7 597.5,51.1 598.0,49.4 598.5,46.8 599.0,47.6 599.5,50.2 600.0,44.3 600.5,35.7 601.0,27.9 601.5,35.2 602.0,43.8 602.5,48.3 603.0,48.3 603.5,44.0 604.0,40.9 604.5,45.0 605.0,49.6 605.5,53.1 606.0,52.8 606.5,51.6 607.0,51.0 607.5,52.1 608.0,53.1 608.5,53.1 609.0,49.7 609.5,46.8 610.0,46.2 610.5,49.0 611.0,50.5 611.5,50.2 612.0,43.2 612.5,37.2 613.0,37.6 613.5,36.4 614.0,38.4 614.5,40.4 615.0,30.7 615.5,19.1 616.0,23.0 616.5,31.7 617.0,19.7 617.5,20.7 618.0,32.8 618.5,44.3 619.0,40.7 619.5,34.6 620.0,38.9 620.5,45.5 621.0,50.0 621.5,47.9 622.0,44.8 622.5,46.5 623.0,49.7 623.5,51.9 624.0,49.9 624.5,48.4 625.0,50.3 625.5,52.2 626.0,52.2 626.5,49.1 627.0,45.4 627.5,43.7 628.0,47.1 628.5,51.0 629.0,50.4 629.5,47.5 630.0,45.7 630.5,48.4 631.0,48.8 631.5,38.5 632.0,29.7 632.5,29.2 633.0,38.0 633.5,48.2 634.0,51.1 634.5,49.5 635.0,47.0 635.5,47.5 636.0,50.1 636.5,48.6 637.0,45.7 637.5,43.9 638.0,34.8 638.5,26.7 639.0,34.3 639.5,43.3 640.0,46.0 640.5,42.2 641.0,36.9 641.5,41.0 642.0,46.8 642.5,47.1 643.0,44.0 643.5,39.3 644.0,42.2 644.5,47.2 645.0,48.8 645.5,46.4 646.0,42.5 646.5,34.2 647.0,29.1 647.5,36.9 648.0,45.7 648.5,47.1 649.0,45.8 649.5,39.7 650.0,31.9 650.5,32.3 651.0,40.2 651.5,48.4 652.0,48.5 652.5,45.6 653.0,45.3 653.5,48.2 654.0,46.7 654.5,49.1 655.0,42.6 655.5,36.5 656.0,37.6 656.5,43.8 657.0,41.8 657.5,35.6 658.0,37.9 658.5,44.3 659.0,46.7 659.5,43.7 660.0,32.9 660.5,23.3 661.0,29.5 661.5,39.8 662.0,50.4 662.5,45.8 663.0,41.7 663.5,43.7 664.0,47.4 664.5,40.6 665.0,29.9 665.5,21.4 666.0,31.2 666.5,42.1 667.0,49.4 667.5,49.5 668.0,46.0 668.5,44.2 669.0,47.4 669.5,47.9 670.0,45.6 670.5,36.4 671.0,25.4 671.5,22.2 672.0,32.8 672.5,37.8 673.0,29.4 673.5,17.1 674.0,20.8 674.5,33.5 675.0,46.6 675.5,44.9 676.0,40.9 676.5,34.7 677.0,38.3 677.5,44.9 678.0,44.9 678.5,39.9 679.0,32.9 679.5,35.9 680.0,43.1 680.5,43.7 681.0,36.3 681.5,29.5 682.0,36.8 682.5,45.0 683.0,47.3 683.5,45.2 684.0,47.7 684.5,42.0 685.0,36.9 685.5,42.0 686.0,47.7 686.5,47.5 687.0,45.2 687.5,44.7 688.0,36.4 688.5,29.0 689.0,35.9 689.5,44.2 690.0,52.2 690.5,51.3 691.0,49.6 691.5,49.6 692.0,51.3 692.5,52.2 693.0,52.2 693.5,49.8 694.0,46.6 694.5,45.2 695.0,48.1 695.5,51.5 696.0,50.3 696.5,48.1 697.0,48.4 697.5,50.6 698.0,51.7 698.5,49.0 699.0,46.6 699.5,48.4 700.0,51.0 700.5,48.4 701.0,42.6 701.5,37.4 702.0,41.2 702.5,46.9 703.0,52.2 703.5,51.3 704.0,49.4 704.5,49.0 705.0,50.9 705.5,50.1 706.0,47.7 706.5,47.7 707.0,50.1 707.5,49.4 708.0,49.0 708.5,42.9 709.0,37.1 709.5,38.7 710.0,44.6 710.5,49.3 711.0,49.3 711.5,51.2 712.0,47.7 712.5,40.9 713.0,34.8 713.5,38.7 714.0,45.2 714.5,46.8 715.0,47.8 715.5,44.2 716.0,39.9 716.5,43.9 717.0,48.6 717.5,44.8 718.0,41.5 718.5,45.3 719.0,49.6 719.5,49.7 720.0,51.0 720.5,52.5 721.0,47.0 721.5,39.8 722.0,33.4 722.5,37.9 723.0,44.9 723.5,52.4 724.0,53.1 724.5,51.9 725.0,50.8 725.5,51.9 726.0,53.1 726.5,51.7 727.0,49.9 727.5,49.3 728.0,49.8 728.5,39.3 729.0,30.5 729.5,28.9 730.0,37.6 730.5,47.6 731.0,47.3 731.5,45.5 732.0,40.8 732.5,41.2 733.0,46.0 733.5,51.1 734.0,49.4 734.5,49.8 735.0,50.0 735.5,47.6 736.0,47.7 736.5,40.8 737.0,34.5 737.5,38.0 738.0,44.6 738.5,33.5 739.0,17.8 739.5,6.2 740.0,20.6 740.5,36.8 741.0,50.4 741.5,48.5 742.0,46.1 742.5,48.6 743.0,50.4 743.5,47.4 744.0,45.2 744.5,41.5 745.0,30.7 745.5,21.0 746.0,30.4 746.5,41.2 747.0,49.6 747.5,46.4 748.0,45.2 748.5,48.2 749.0,50.0 749.5,38.2 750.0,27.2 750.5,21.5 751.0,31.8 751.5,43.6 752.0,44.5 752.5,41.4 753.0,35.3 753.5,38.3 754.0,44.7 754.5,47.1 755.0,47.7 755.5,40.6 756.0,33.1 756.5,33.1 757.0,40.6 757.5,49.5 758.0,50.7 758.5,49.0 759.0,50.0 759.5,51.9 760.0,51.9 760.5,49.9 761.0,48.5 761.5,50.4 762.0,51.1 762.5,48.8 763.0,47.5 763.5,42.6 764.0,33.7 764.5,27.2 765.0,35.3 765.5,44.5 766.0,50.0 766.5,46.8 767.0,43.8 767.5,46.9 768.0,50.0 768.5,45.1 769.0,39.2 769.5,37.4 770.0,43.0 770.5,49.4 771.0,49.2 771.5,45.7 772.0,44.0 772.5,47.4 773.0,48.1 773.5,46.2 774.0,36.7 774.5,26.2 775.0,24.1 775.5,34.3 776.0,46.1 776.5,52.2 777.0,51.3 777.5,49.5 778.0,49.6 778.5,50.3 779.0,47.8 779.5,47.4 780.0,38.8 780.5,31.2 781.0,33.7 781.5,41.6 782.0,47.2 782.5,47.4 783.0,43.0 783.5,37.9 784.0,41.0 784.5,46.6 785.0,49.4 785.5,47.3 786.0,49.0 786.5,40.1 787.0,31.6 787.5,29.9 788.0,38.1 788.5,47.7 789.0,49.2 789.5,45.9 790.0,44.7 790.5,47.9 791.0,50.3 791.5,47.8 792.0,47.4 792.5,38.5 793.0,28.3 793.5,24.1 794.0,33.8 794.5,36.5 795.0,25.8 795.5,23.3 796.0,33.7 796.5,45.7 797.0,47.7 797.5,48.1 798.0,44.6 798.5,44.7 799.0,48.2 799.5,51.7 800.0,51.7 800.5,50.1 801.0,48.0 801.5,48.6 802.5,53.1 803.0,52.7 803.5,51.9 804.0,52.6 804.5,53.1 805.0,53.1 805.5,50.5 806.0,47.5 806.5,45.3 807.0,48.1 807.5,51.2 808.0,53.1 808.5,53.1 809.0,52.3 809.5,51.9 810.0,52.7 810.5,53.1 811.0,52.7 811.5,52.5 812.0,53.1 843.5,53.1 844.0,52.6 L844.0,56.6 843.5,56.1 812.0,56.1 811.5,56.6 811.0,56.4 810.5,56.1 810.0,56.4 809.5,57.2 809.0,56.8 808.5,56.1 808.0,56.1 807.5,58.1 807.0,61.2 806.5,64.1 806.0,61.9 805.5,58.8 805.0,56.1 804.5,56.1 804.0,56.7 803.5,57.5 803.0,56.7 802.5,56.1 802.0,58.1 801.5,60.2 801.0,60.9 800.5,58.8 800.0,57.5 799.5,57.5 799.0,61.2 798.5,64.8 798.0,64.9 797.5,61.3 797.0,61.0 796.5,63.2 796.0,74.8 795.5,84.8 795.0,82.4 794.5,72.1 794.0,75.1 793.5,84.8 793.0,80.7 792.5,70.5 792.0,61.7 791.5,61.3 791.0,58.8 790.5,61.1 790.0,64.2 789.5,63.0 789.0,59.8 788.5,61.4 788.0,70.8 787.5,78.9 787.0,77.2 786.5,68.9 786.0,59.9 785.5,61.5 785.0,59.5 784.5,62.4 784.0,67.8 783.5,70.9 783.0,65.9 782.5,61.8 782.0,62.0 781.5,66.6 781.0,74.0 780.5,76.3 780.0,69.3 779.5,62.1 779.0,61.6 778.5,59.1 778.0,59.8 777.5,59.9 777.0,58.0 776.5,57.0 776.0,63.6 775.5,76.1 775.0,86.9 774.5,84.6 774.0,73.6 773.5,62.3 773.0,60.6 772.5,62.1 772.0,65.5 771.5,63.8 771.0,60.2 770.5,59.8 770.0,65.2 769.5,70.3 769.0,68.6 768.5,63.3 768.0,59.2 767.5,62.3 767.0,65.5 766.5,62.5 766.0,59.2 765.5,64.2 765.0,73.0 764.5,80.7 764.0,74.5 763.5,66.0 763.0,61.2 762.5,60.0 762.0,57.9 761.5,59.1 761.0,61.0 760.5,59.6 760.0,57.5 759.5,57.3 759.0,59.1 758.5,60.1 758.0,58.4 757.5,59.8 757.0,68.7 756.5,76.2 756.0,76.2 755.5,68.7 755.0,61.1 754.5,61.7 754.0,64.8 753.5,71.4 753.0,74.4 752.5,68.2 752.0,64.4 751.5,65.4 751.0,76.9 750.5,87.1 750.0,81.5 749.5,70.7 749.0,59.2 748.5,61.0 748.0,64.0 747.5,62.8 747.0,59.7 746.5,67.2 746.0,77.4 745.5,86.2 745.0,77.1 744.5,66.9 744.0,63.7 743.5,61.6 743.0,58.6 742.5,60.4 742.0,62.7 741.5,60.4 741.0,58.7 740.5,72.3 740.0,88.4 739.5,102.6 739.0,91.1 738.5,75.5 738.0,64.3 737.5,70.7 737.0,74.1 736.5,68.0 736.0,61.4 735.5,61.5 735.0,59.1 734.5,59.8 734.0,60.4 733.5,58.5 733.0,63.2 732.5,68.0 732.0,68.4 731.5,63.7 731.0,61.4 730.5,61.6 730.0,71.6 729.5,80.1 729.0,78.6 728.5,69.8 728.0,59.4 727.5,59.9 727.0,59.3 726.5,57.5 726.0,56.1 725.5,57.4 725.0,58.5 724.5,57.4 724.0,56.1 723.5,56.8 723.0,64.4 722.5,71.4 722.0,76.0 721.5,69.5 721.0,62.2 720.5,56.6 720.0,58.2 719.5,59.4 719.0,59.5 718.5,63.9 718.0,67.7 717.5,64.4 717.0,60.4 716.5,65.0 716.0,68.9 715.5,64.7 715.0,61.0 714.5,62.0 714.0,64.2 713.5,70.8 713.0,74.8 712.5,68.6 712.0,61.6 711.5,57.9 711.0,59.7 710.5,59.7 710.0,64.7 709.5,70.8 709.0,72.4 708.5,66.5 708.0,60.0 707.5,59.6 707.0,59.4 706.5,62.0 706.0,62.0 705.5,59.4 705.0,58.2 704.5,60.0 704.0,59.6 703.5,57.8 703.0,57.0 702.5,62.5 702.0,68.2 701.5,72.1 701.0,66.8 700.5,60.9 700.0,58.3 699.5,60.9 699.0,62.7 698.5,60.3 698.0,57.5 697.5,58.5 697.0,60.7 696.5,61.0 696.0,58.8 695.5,57.8 695.0,61.3 694.5,64.4 694.0,62.9 693.5,59.6 693.0,57.0 692.5,57.0 692.0,57.9 691.5,59.7 691.0,59.7 690.5,57.9 690.0,57.0 689.5,64.9 689.0,73.1 688.5,80.1 688.0,72.7 687.5,64.4 687.0,63.7 686.5,61.6 686.0,61.2 685.5,66.7 685.0,71.6 684.5,66.7 684.0,61.2 683.5,64.1 683.0,62.0 682.5,63.9 682.0,71.7 681.5,78.7 681.0,72.2 680.5,65.5 680.0,65.8 679.5,72.9 679.0,75.8 678.5,69.0 678.0,64.3 677.5,64.3 677.0,70.5 676.5,74.0 676.0,68.0 675.5,64.3 675.0,62.6 674.5,74.5 674.0,86.5 673.5,90.0 673.0,78.4 672.5,72.3 672.0,77.2 671.5,88.2 671.0,84.9 670.5,73.5 670.0,63.4 669.5,61.2 669.0,62.0 668.5,65.4 668.0,63.4 667.5,59.9 667.0,59.8 666.5,66.9 666.0,77.7 665.5,87.2 665.0,78.9 664.5,68.3 664.0,61.5 663.5,65.9 663.0,68.0 662.5,63.8 662.0,59.0 661.5,69.1 661.0,79.2 660.5,85.3 660.0,75.9 659.5,65.3 659.0,62.9 658.5,65.3 658.0,71.9 657.5,74.2 657.0,67.9 656.5,65.3 656.0,71.5 655.5,72.6 655.0,66.5 654.5,60.1 654.0,62.5 653.5,61.0 653.0,63.8 652.5,63.5 652.0,60.7 651.5,60.8 651.0,70.1 650.5,78.7 650.0,79.2 649.5,70.7 649.0,63.5 648.5,62.2 648.0,63.1 647.5,71.6 647.0,79.1 646.5,74.3 646.0,66.2 645.5,62.5 645.0,60.2 644.5,62.2 644.0,67.5 643.5,70.5 643.0,65.6 642.5,62.1 642.0,62.5 641.5,68.3 641.0,72.4 640.5,67.0 640.0,63.2 639.5,65.3 639.0,73.8 638.5,81.0 638.0,73.3 637.5,64.7 637.0,63.6 636.5,60.7 636.0,58.7 635.5,61.2 635.0,61.7 634.5,59.3 634.0,58.1 633.5,61.0 633.0,71.3 632.5,80.2 632.0,79.6 631.5,70.7 631.0,60.4 630.5,60.7 630.0,63.3 629.5,61.5 629.0,58.7 628.5,58.0 628.0,61.8 627.5,65.1 627.0,63.4 626.5,59.9 626.0,57.0 625.5,57.0 625.0,58.9 624.5,60.7 624.0,59.3 623.5,57.3 623.0,59.6 622.5,63.0 622.0,64.7 621.5,61.6 621.0,59.2 620.5,63.7 620.0,70.3 619.5,74.6 619.0,68.5 618.5,64.9 618.0,76.2 617.5,88.3 617.0,89.4 616.5,77.4 616.0,86.3 615.5,90.1 615.0,78.6 614.5,68.8 614.0,70.8 613.5,72.8 613.0,72.5 612.5,72.9 612.0,66.6 611.5,59.2 611.0,58.7 610.5,60.3 610.0,63.2 609.5,62.6 609.0,59.7 608.5,56.1 608.0,56.1 607.5,57.1 607.0,58.2 606.5,57.7 606.0,56.5 605.5,56.1 605.0,59.4 604.5,63.8 604.0,67.8 603.5,64.7 603.0,60.9 602.5,60.9 602.0,65.2 601.5,73.5 601.0,80.6 600.5,73.1 600.0,64.6 599.5,58.6 599.0,61.1 598.5,61.8 598.0,59.4 597.5,58.1 597.0,59.6 596.5,62.8 596.0,64.2 595.5,61.2 595.0,57.7 594.5,57.0 594.0,57.8 593.5,59.6 593.0,60.0 592.5,58.2 592.0,57.3 591.5,64.7 591.0,80.5 590.5,94.1 590.0,92.9 589.5,79.2 589.0,63.0 588.5,60.3 588.0,61.5 587.5,64.8 587.0,63.6 586.5,60.2 586.0,56.1 585.0,56.1 584.5,57.0 584.0,58.1 583.5,57.8 583.0,56.6 582.5,58.1 582.0,70.0 581.5,80.5 581.0,86.5 580.5,76.7 580.0,65.5 579.5,67.3 579.0,63.6 578.5,67.6 578.0,76.7 577.5,82.4 577.0,74.0 576.5,64.4 576.0,62.5 575.5,60.5 575.0,64.2 574.5,65.6 574.0,62.1 573.5,58.1 573.0,56.4 572.0,56.4 571.5,57.4 571.0,59.0 570.5,59.0 570.0,57.5 569.5,56.4 569.0,56.4 568.5,59.8 568.0,64.9 567.5,69.4 567.0,66.3 566.5,61.5 566.0,60.5 565.5,62.9 565.0,60.8 564.5,61.4 564.0,66.7 563.5,71.3 563.0,66.4 562.5,61.5 562.0,60.0 561.5,64.6 561.0,68.7 560.5,65.0 560.0,60.4 559.5,57.3 559.0,56.4 558.5,56.1 558.0,56.1 557.5,57.4 557.0,58.9 556.5,59.1 556.0,57.6 555.5,56.1 555.0,56.1 554.5,56.3 554.0,57.2 553.5,60.0 553.0,66.5 552.5,70.0 552.0,68.7 551.5,69.1 551.0,75.9 550.5,73.0 550.0,66.2 549.5,67.1 549.0,69.4 548.5,66.6 548.0,71.8 547.5,68.1 547.0,67.9 546.5,65.0 546.0,62.6 545.5,60.4 545.0,57.9 544.5,57.0 544.0,58.9 543.5,60.7 543.0,59.4 542.5,57.4 542.0,57.7 541.5,67.9 541.0,78.5 540.5,87.8 540.0,78.2 539.5,67.5 539.0,60.0 538.5,58.3 538.0,59.9 537.5,59.7 537.0,57.9 536.5,59.6 536.0,68.9 535.5,76.7 535.0,77.2 534.5,69.4 534.0,68.8 533.5,69.9 533.0,67.0 532.5,68.7 532.0,65.5 531.5,64.6 531.0,65.3 530.5,67.4 530.0,70.6 529.5,70.3 529.0,64.7 528.5,68.9 528.0,65.7 527.5,66.0 527.0,68.9 526.5,69.3 526.0,66.9 525.5,65.9 525.0,69.2 524.5,66.4 524.0,67.4 523.5,72.1 523.0,67.0 522.5,66.1 522.0,64.5Z"/>
<path fill="#00ff00" d="M0.0,162.5 0.5,163.1 1.0,163.1 9.0,163.1 9.5,162.7 10.0,162.7 10.5,163.1 11.0,162.6 11.5,161.5 12.0,161.6 12.5,160.7 13.0,158.4 13.5,158.2 14.0,160.4 14.5,162.9 15.0,163.1 15.5,163.1 16.0,162.4 16.5,161.5 17.0,162.0 17.5,163.1 18.0,163.1 18.5,160.7 19.0,157.3 19.5,154.3 20.0,156.9 20.5,160.3 21.0,162.9 21.5,161.9 22.0,161.4 22.5,162.4 23.0,163.1 23.5,161.0 24.0,158.5 24.5,157.0 25.0,159.3 25.5,162.0 26.0,163.1 26.5,163.1 27.0,162.3 27.5,162.0 28.0,162.8 28.5,162.5 29.0,161.3 29.5,161.1 30.0,162.3 30.5,160.9 31.0,159.5 31.5,160.8 32.0,159.0 32.5,159.2 33.0,160.5 33.5,160.0 34.0,160.9 34.5,159.7 35.0,159.9 35.5,160.3 36.0,159.0 36.5,156.1 37.0,156.4 37.5,159.4 38.0,162.9 38.5,162.0 39.0,160.9 39.5,161.7 40.0,162.9 40.5,163.1 41.0,159.3 41.5,155.0 42.0,151.3 42.5,155.2 43.0,159.4 43.5,163.1 44.0,162.6 44.5,161.8 45.0,162.5 45.5,163.1 46.0,162.7 46.5,161.5 47.0,160.9 47.5,162.1 48.0,163.1 49.0,163.1 49.5,160.4 50.0,157.6 50.5,156.2 51.0,158.8 51.5,161.8 52.0,163.1 52.5,163.1 53.0,162.5 53.5,162.8 54.0,163.1 55.5,163.1 56.0,162.4 56.5,161.4 57.0,161.9 57.5,161.7 58.0,160.2 58.5,158.6 59.0,152.8 59.5,147.7 60.0,151.3 60.5,156.9 61.0,159.1 61.5,157.7 62.0,152.1 62.5,147.1 63.0,152.1 63.5,157.7 64.0,161.5 64.5,159.6 65.0,158.9 65.5,160.7 66.0,157.0 66.5,152.6 67.0,151.8 67.5,156.1 68.0,161.1 68.5,163.1 69.0,162.9 69.5,161.6 70.0,160.9 70.5,162.0 71.0,163.1 71.5,163.1 72.0,162.3 72.5,162.2 73.0,163.0 73.5,161.3 74.0,157.9 74.5,154.8 75.0,156.5 75.5,159.7 76.0,161.1 76.5,159.3 77.0,156.8 77.5,157.8 78.0,160.4 78.5,161.7 79.0,160.1 79.5,157.9 80.0,158.4 80.5,160.7 81.0,163.1 81.5,162.1 82.0,161.1 82.5,162.0 83.0,163.1 83.5,162.8 84.0,156.7 84.5,150.6 85.0,146.0 85.5,151.5 86.0,157.7 86.5,158.9 87.0,157.5 87.5,155.9 88.0,149.1 88.5,143.5 89.0,149.7 89.5,156.6 90.0,162.2 90.5,161.9 91.0,160.1 91.5,159.0 92.0,160.8 92.5,160.8 93.0,159.0 93.5,157.9 94.0,147.4 94.5,138.4 95.0,139.2 95.5,148.3 96.0,159.0 96.5,162.8 97.0,161.5 97.5,160.1 98.0,160.6 98.5,161.2 99.0,159.5 99.5,159.7 100.0,153.4 100.5,147.2 101.0,146.4 101.5,152.6 102.0,159.8 102.5,163.1 103.0,162.2 103.5,161.3 104.5,163.1 105.0,163.1 105.5,159.8 106.0,156.3 106.5,153.8 107.0,157.0 107.5,153.0 108.0,145.2 108.5,140.9 109.0,148.2 109.5,156.6 110.0,162.2 110.5,161.5 111.0,159.6 111.5,159.0 112.0,160.9 112.5,157.6 113.0,153.6 113.5,153.1 114.0,157.0 114.5,158.8 115.0,152.6 115.5,147.1 116.0,149.8 116.5,155.6 117.0,161.1 117.5,159.6 118.0,157.2 118.5,158.0 119.0,160.5 119.5,160.5 120.0,154.8 120.5,149.8 121.0,150.7 121.5,155.8 122.0,156.4 122.5,152.4 123.0,153.9 123.5,158.0 124.0,160.5 124.5,160.3 125.0,157.5 125.5,156.0 126.0,158.7 126.5,161.7 127.0,161.4 127.5,159.1 128.0,157.6 128.5,159.7 129.0,161.7 129.5,161.7 130.0,157.7 130.5,153.3 131.0,151.6 131.5,155.7 132.0,160.5 132.5,161.1 133.0,160.2 133.5,157.7 134.0,157.4 134.5,159.8 135.0,161.1 135.5,159.6 136.0,156.6 136.5,155.7 137.0,158.6 137.5,160.5 138.0,156.2 138.5,152.1 139.0,153.4 139.5,157.6 140.0,159.4 140.5,159.4 141.0,156.6 141.5,153.2 142.0,155.7 142.5,159.5 143.0,162.2 143.5,160.6 144.0,159.6 144.5,156.8 145.0,150.8 145.5,146.1 146.0,151.5 146.5,157.6 147.0,162.6 147.5,161.4 148.0,161.1 148.5,161.1 149.0,158.4 149.5,150.9 150.0,144.4 150.5,146.7 151.0,153.6 151.5,161.9 152.0,163.0 152.5,162.1 153.0,162.3 153.5,163.1 154.0,163.1 154.5,162.5 155.0,160.1 155.5,158.0 156.0,159.0 156.5,160.2 157.0,155.9 157.5,152.1 158.0,154.7 158.5,141.2 159.0,127.0 159.5,122.4 160.0,136.1 160.5,151.9 161.0,157.6 161.5,156.3 162.0,150.0 162.5,145.2 163.0,150.9 163.5,157.4 164.0,153.4 164.5,150.6 165.0,154.9 165.5,158.8 166.0,155.1 166.5,153.5 167.0,157.0 167.5,159.4 168.0,157.6 168.5,152.9 169.0,150.1 169.5,154.6 170.0,159.6 170.5,163.1 171.0,162.2 171.5,161.1 172.0,161.6 172.5,162.8 173.0,163.1 173.5,162.5 174.0,161.5 174.5,161.8 175.0,161.7 175.5,160.1 176.0,157.9 176.5,150.7 177.0,144.4 177.5,147.9 178.0,154.6 178.5,162.3 179.0,163.1 179.5,162.6 180.0,161.8 180.5,162.5 181.0,163.1 181.5,163.1 182.0,162.1 182.5,160.1 183.0,158.6 183.5,160.3 184.0,162.2 184.5,162.2 185.0,159.7 185.5,156.5 186.0,154.7 186.5,157.7 187.0,161.2 187.5,163.1 188.0,162.5 188.5,161.3 189.0,160.9 189.5,162.1 190.0,163.1 190.5,163.1 191.0,160.3 191.5,155.3 192.0,150.9 192.5,152.6 193.0,157.2 193.5,162.9 194.0,162.3 194.5,161.2 195.0,161.5 195.5,162.6 196.0,159.1 196.5,154.2 197.0,149.9 197.5,153.7 198.0,158.4 198.5,161.0 199.0,159.2 199.5,159.7 200.0,153.0 200.5,144.6 201.0,138.9 201.5,146.6 202.0,155.3 202.5,158.8 203.0,158.8 203.5,155.7 204.0,151.9 204.5,154.7 205.0,158.9 205.5,160.2 206.0,158.3 206.5,160.0 207.0,159.3 207.5,147.5 208.0,136.6 208.5,132.2 209.0,142.6 209.5,154.4 210.0,161.8 210.5,160.4 211.0,160.6 211.5,161.4 212.0,157.6 212.5,154.3 213.0,155.5 213.5,159.0 214.0,162.2 214.5,160.8 215.0,158.9 215.5,159.3 216.0,161.2 216.5,156.3 217.0,148.9 217.5,142.3 218.0,147.8 218.5,155.0 219.0,157.5 219.5,157.7 220.0,152.5 220.5,148.3 221.0,153.1 221.5,158.5 222.0,162.2 222.5,162.2 223.0,160.7 223.5,159.0 224.0,160.0 224.5,161.9 225.0,162.2 225.5,160.9 226.0,158.6 226.5,158.0 227.0,160.1 227.5,148.6 228.0,136.2 228.5,126.0 229.0,137.3 229.5,149.9 230.0,161.2 230.5,160.7 231.0,160.3 231.5,161.1 232.0,158.7 232.5,157.6 233.0,151.1 233.5,143.8 234.0,143.8 234.5,151.1 235.0,156.1 235.5,151.8 236.0,152.6 236.5,157.0 237.0,160.2 237.5,158.7 238.0,160.4 L238.0,168.9 237.5,170.8 237.0,169.2 236.5,172.7 236.0,177.3 235.5,178.2 235.0,173.6 234.5,177.8 234.0,184.9 233.5,184.9 233.0,177.8 232.5,171.5 232.0,170.4 231.5,168.1 231.0,169.2 230.5,168.8 230.0,168.1 229.5,179.5 229.0,192.3 228.5,203.7 228.0,193.4 227.5,180.8 227.0,169.2 226.5,171.4 226.0,170.7 225.5,168.4 225.0,167.0 224.5,167.3 224.0,169.2 223.5,170.2 223.0,168.5 222.5,167.0 222.0,167.0 221.5,170.7 221.0,176.1 220.5,180.9 220.0,176.7 219.5,171.5 219.0,171.3 218.5,174.2 218.0,181.5 217.5,187.0 217.0,180.4 216.5,173.0 216.0,167.8 215.5,169.6 215.0,170.0 214.5,168.2 214.0,167.0 213.5,170.5 213.0,174.1 212.5,175.4 212.0,171.9 211.5,167.9 211.0,168.7 210.5,169.0 210.0,167.5 209.5,174.5 209.0,185.9 208.5,195.9 208.0,191.7 207.5,181.2 207.0,170.1 206.5,169.1 206.0,170.8 205.5,169.0 205.0,170.3 204.5,174.4 204.0,177.2 203.5,173.4 203.0,170.4 202.5,170.4 202.0,174.0 201.5,182.9 201.0,190.7 200.5,184.9 200.0,176.4 199.5,169.5 199.0,170.0 198.5,168.2 198.0,170.9 197.5,175.8 197.0,179.6 196.5,175.2 196.0,170.3 195.5,166.7 195.0,167.9 194.5,168.2 194.0,167.0 193.5,166.4 193.0,172.0 192.5,176.7 192.0,178.5 191.5,174.0 191.0,168.9 190.5,166.1 190.0,166.1 189.5,167.0 189.0,168.2 188.5,167.9 188.0,166.6 187.5,166.1 187.0,168.1 186.5,171.8 186.0,175.0 185.5,173.1 185.0,169.7 184.5,167.0 184.0,167.0 183.0,170.3 182.5,168.9 182.0,167.0 181.5,166.1 181.0,166.1 180.5,166.6 180.0,167.3 179.5,166.5 179.0,166.1 178.5,167.1 178.0,175.6 177.5,182.9 177.0,186.7 176.5,179.8 176.0,172.0 175.5,168.8 175.0,167.3 174.5,167.4 174.0,167.7 173.5,166.7 173.0,166.1 172.5,166.4 172.0,167.6 171.5,168.1 171.0,167.0 170.5,166.1 170.0,169.6 169.5,174.6 169.0,179.1 168.5,176.4 168.0,171.6 167.5,169.8 167.0,172.3 166.5,175.9 166.0,174.2 165.5,170.5 165.0,174.1 164.5,178.2 164.0,175.5 163.5,171.9 163.0,178.4 162.5,184.2 162.0,179.4 161.5,173.0 161.0,171.3 160.5,178.4 160.0,195.6 159.5,210.6 159.0,205.6 158.5,190.1 158.0,174.7 157.5,177.3 157.0,173.5 156.5,169.1 156.0,170.0 155.5,171.0 155.0,169.0 154.5,166.7 154.0,166.1 153.5,166.1 153.0,166.9 152.5,167.0 152.0,166.2 151.5,167.3 151.0,175.6 150.5,182.5 150.0,184.9 149.5,178.3 149.0,170.8 148.5,168.3 148.0,168.1 147.5,167.8 147.0,166.6 146.5,171.5 146.0,177.6 145.5,183.0 145.0,178.3 144.5,172.3 144.0,169.5 143.5,168.6 143.0,167.0 142.5,169.4 142.0,172.9 141.5,175.3 141.0,172.1 140.5,169.8 140.0,169.8 139.5,171.7 139.0,176.0 138.5,177.2 138.0,173.1 137.5,168.7 137.0,170.4 136.5,173.3 136.0,172.4 135.5,169.5 135.0,168.1 134.5,169.5 134.0,172.0 133.5,171.6 133.0,169.1 132.5,168.1 132.0,168.9 131.5,173.9 131.0,178.2 130.5,176.3 130.0,171.8 129.5,167.5 129.0,167.5 128.5,169.3 128.0,171.4 127.5,169.9 127.0,167.7 126.5,167.5 126.0,170.7 125.5,173.4 125.0,171.9 124.5,169.0 124.0,168.7 123.5,171.3 123.0,175.4 122.5,176.8 122.0,172.9 121.5,172.7 121.0,177.4 120.5,178.3 120.0,173.7 119.5,168.3 119.0,168.9 118.5,171.6 118.0,172.4 117.5,169.9 117.0,168.1 116.5,173.7 116.0,179.6 115.5,182.4 115.0,176.8 114.5,170.4 114.0,172.2 113.5,176.1 113.0,175.7 112.5,171.7 112.0,168.5 111.5,170.3 111.0,169.8 110.5,167.8 110.0,167.0 109.5,172.9 109.0,181.6 108.5,189.2 108.0,184.8 107.5,176.7 107.0,172.3 106.5,175.6 106.0,173.0 105.5,169.5 105.0,166.1 104.5,166.1 104.0,167.2 103.5,168.2 102.5,166.1 102.0,169.3 101.5,176.5 101.0,182.7 100.5,182.0 100.0,175.7 99.5,169.7 99.0,170.0 98.5,168.1 98.0,168.7 97.5,169.3 97.0,167.8 96.5,166.4 96.0,169.9 95.5,180.1 95.0,188.7 94.5,189.4 94.0,180.9 93.5,171.0 93.0,170.4 92.5,168.5 92.0,168.7 91.5,170.5 91.0,169.4 90.5,167.5 90.0,167.0 89.5,172.8 89.0,179.8 88.5,186.1 88.0,180.4 87.5,173.5 87.0,171.8 86.5,170.4 86.0,171.4 85.5,177.5 85.0,182.9 84.5,178.4 84.0,172.5 83.5,166.4 83.0,166.1 82.5,167.2 82.0,168.1 81.5,167.1 81.0,166.1 80.0,170.4 79.5,170.9 79.0,168.8 78.5,167.5 78.0,168.7 77.5,171.3 77.0,172.3 76.5,169.8 76.0,168.1 75.5,169.8 75.0,173.3 74.5,175.0 74.0,171.8 73.5,168.1 73.0,166.2 72.5,167.1 72.0,167.0 71.5,166.2 71.0,166.1 70.0,168.5 69.5,167.7 69.0,166.4 68.5,166.1 68.0,167.8 67.5,172.4 67.0,176.3 66.5,175.6 66.0,171.6 65.5,168.3 65.0,170.1 64.5,169.4 64.0,167.6 63.5,171.7 63.0,177.5 62.5,182.8 62.0,177.5 61.5,171.7 61.0,170.3 60.5,172.3 60.0,177.7 59.5,181.3 59.0,176.3 58.5,170.6 58.0,169.0 57.5,167.5 57.0,167.4 56.5,167.9 56.0,166.8 55.5,166.1 54.0,166.1 53.5,166.3 53.0,166.6 52.5,166.1 52.0,166.1 51.5,167.5 51.0,170.5 50.5,173.2 50.0,171.7 49.5,168.9 49.0,166.1 48.0,166.1 47.5,167.0 47.0,168.1 46.5,167.6 46.0,166.4 45.5,166.1 45.0,166.7 44.5,167.4 44.0,166.5 43.5,166.1 43.0,170.0 42.5,174.4 42.0,178.4 41.5,174.6 41.0,170.1 40.5,166.1 40.0,166.4 39.5,167.6 39.0,168.5 38.5,167.3 38.0,166.3 37.5,169.8 37.0,172.7 36.5,173.1 36.0,170.2 35.5,168.9 35.0,169.3 34.5,169.5 34.0,168.3 33.5,169.2 33.0,168.7 32.5,169.5 32.0,169.7 31.5,168.4 31.0,169.7 30.5,168.3 30.0,166.9 29.5,168.1 29.0,167.8 28.5,166.7 28.0,166.4 27.5,167.3 27.0,167.0 26.5,166.1 26.0,166.1 25.5,167.3 25.0,169.9 24.5,172.3 24.0,170.8 23.5,168.2 23.0,166.1 22.5,166.9 22.0,168.0 21.5,167.4 21.0,166.3 20.5,168.9 20.0,172.3 19.5,174.9 19.0,171.9 18.5,168.5 18.0,166.1 17.5,166.2 17.0,167.3 16.5,167.9 16.0,166.9 15.5,166.1 15.0,166.1 14.5,166.4 14.0,169.0 13.5,171.3 13.0,171.0 12.5,168.7 12.0,167.5 11.5,167.6 11.0,166.6 10.5,166.1 10.0,166.4 9.5,166.4 9.0,166.1 0.5,166.1 0.0,166.7Z"/><path fill="#64ff64" d="M238.0,160.4 238.5,162.4 239.0,161.2 239.5,159.7 240.0,160.5 240.5,162.1 241.0,162.8 241.5,162.4 242.0,160.4 242.5,158.7 243.0,160.1 243.5,162.1 244.0,162.2 244.5,158.8 245.0,154.3 245.5,150.8 246.0,154.8 246.5,159.4 247.0,162.2 247.5,161.9 248.0,160.0 248.5,159.0 249.0,160.8 249.5,159.1 250.0,157.3 250.5,152.0 251.0,144.3 251.5,142.1 252.0,149.5 252.5,157.8 253.0,156.4 253.5,153.5 254.0,147.5 254.5,147.3 255.0,153.3 255.5,160.4 256.0,159.4 256.5,157.0 257.0,158.4 257.5,160.9 258.0,159.1 258.5,152.7 259.0,147.1 259.5,149.5 260.0,155.3 260.5,155.3 261.0,148.0 261.5,141.8 262.0,148.4 262.5,155.8 263.0,162.2 263.5,161.7 264.0,159.8 264.5,158.6 265.0,160.4 265.5,162.5 266.0,161.3 266.5,159.9 267.0,160.9 267.5,162.5 268.0,157.0 268.5,151.8 269.0,148.8 269.5,153.7 270.0,159.2 270.5,157.1 271.0,153.0 271.5,153.0 272.0,157.1 272.5,156.9 273.0,152.2 273.5,145.1 274.0,144.1 274.5,151.0 275.0,145.6 275.5,135.4 276.0,135.7 276.5,145.9 277.0,155.4 277.5,154.3 278.0,148.5 278.5,147.8 279.0,153.6 279.5,160.2 280.0,161.1 280.5,158.6 281.0,156.4 281.5,148.4 282.0,138.5 282.5,135.0 283.0,144.6 283.5,155.6 284.0,156.6 284.5,151.3 285.0,148.7 285.5,153.7 286.0,156.6 286.5,156.0 287.0,149.9 287.5,146.1 288.0,151.7 288.5,157.3 289.0,154.5 289.5,146.9 290.0,138.5 290.5,141.5 291.0,150.3 291.5,159.9 292.0,153.4 292.5,147.8 293.0,148.9 293.5,154.7 294.0,155.3 294.5,140.4 295.0,127.6 295.5,128.3 296.0,141.2 296.5,156.1 297.0,152.2 297.5,142.7 298.0,135.2 298.5,143.9 299.0,153.5 299.5,160.0 300.0,157.1 300.5,154.1 301.5,160.0 302.0,156.6 302.5,149.3 303.0,142.9 303.5,148.1 304.0,155.1 304.5,162.2 305.0,160.6 305.5,159.8 306.0,161.3 306.5,163.0 307.0,163.1 308.5,163.1 309.0,162.8 309.5,162.7 310.0,163.1 311.0,163.1 311.5,163.1 312.0,159.4 312.5,156.4 313.0,155.6 313.5,158.6 314.0,162.0 314.5,162.2 315.0,160.4 315.5,158.6 316.0,160.1 316.5,159.0 317.0,150.0 317.5,135.5 318.0,122.6 318.5,130.9 319.0,144.7 319.5,156.9 320.0,156.1 320.5,149.0 321.0,142.6 321.5,148.6 322.0,155.7 322.5,160.7 323.0,158.2 323.5,157.2 324.0,159.6 324.5,152.3 325.0,145.1 325.5,143.4 326.0,150.5 326.5,158.6 327.0,162.2 327.5,160.7 328.0,160.2 328.5,161.6 329.0,160.7 329.5,158.5 330.0,158.0 330.5,159.1 331.0,156.4 331.5,147.7 332.0,137.2 332.5,133.6 333.0,143.6 333.5,151.1 334.0,146.7 334.5,149.7 335.0,144.4 335.5,148.6 336.0,150.3 336.5,148.6 337.0,146.7 337.5,152.1 338.0,150.4 338.5,155.1 339.0,157.4 339.5,162.8 340.0,161.2 340.5,159.7 341.0,160.9 341.5,162.5 342.0,162.8 342.5,162.8 343.0,158.4 343.5,152.5 344.0,147.3 344.5,151.2 345.0,156.8 345.5,158.8 346.0,158.1 346.5,154.4 347.0,153.7 347.5,157.4 348.0,158.8 348.5,156.0 349.0,150.8 349.5,149.1 350.0,144.8 350.5,145.0 351.0,146.1 351.5,144.1 352.0,144.6 352.5,138.5 353.0,141.5 353.5,144.6 354.0,146.0 354.5,147.3 355.0,138.6 355.5,140.5 356.0,148.8 356.5,149.1 357.0,155.1 357.5,160.3 358.0,158.8 358.5,159.7 359.0,161.6 359.5,161.3 360.0,158.8 360.5,156.8 361.0,159.1 361.5,161.1 362.0,159.1 362.5,154.6 363.0,150.5 363.5,154.4 364.0,159.0 364.5,161.1 365.0,161.1 365.5,158.6 366.0,156.9 366.5,159.2 367.0,161.4 367.5,162.2 368.5,162.2 369.0,161.7 369.5,159.9 370.0,159.3 370.5,161.0 371.0,162.2 372.0,162.2 372.5,160.3 373.0,158.3 373.5,154.9 374.0,154.9 374.5,158.3 375.0,160.1 375.5,161.7 376.5,161.7 377.0,160.2 377.5,158.1 378.0,158.8 378.5,161.0 379.0,161.7 380.0,161.7 380.5,158.0 381.0,152.7 381.5,147.6 382.0,151.4 382.5,156.9 383.0,162.2 384.0,162.2 384.5,162.2 385.0,160.3 385.5,158.8 386.0,160.5 386.5,162.2 388.0,162.2 388.5,158.5 389.0,154.5 389.5,152.7 390.0,156.5 390.5,159.6 391.0,161.7 392.0,161.7 392.5,160.9 393.0,158.8 393.5,158.5 394.0,160.6 394.5,161.7 395.5,161.7 396.0,157.3 396.5,152.9 397.0,147.0 397.5,148.4 398.0,154.4 398.5,161.1 400.0,161.1 400.5,159.4 401.0,157.1 401.5,158.5 402.0,161.0 402.5,161.1 403.5,161.1 404.0,159.8 404.5,156.2 405.0,152.9 405.5,156.2 406.0,160.0 406.5,162.2 407.5,162.2 408.0,161.9 408.5,160.1 409.0,159.0 409.5,160.7 410.0,162.2 411.5,162.2 412.0,157.2 412.5,152.9 413.0,151.9 413.5,156.1 414.0,158.7 414.5,161.1 415.5,161.1 416.0,159.8 416.5,157.3 417.0,157.6 417.5,160.1 418.0,161.1 419.0,161.1 419.5,158.6 420.0,156.2 420.5,158.6 421.0,161.1 422.5,161.1 423.0,158.5 423.5,154.3 424.0,151.8 424.5,155.8 425.0,159.4 425.5,162.2 426.5,162.2 427.0,161.4 427.5,159.5 428.0,159.1 428.5,160.9 429.0,162.2 430.0,162.2 430.5,157.6 431.0,153.9 431.5,148.4 432.0,149.0 432.5,154.6 433.0,157.3 433.5,161.1 434.5,161.1 435.0,159.5 435.5,157.2 436.0,158.4 436.5,160.8 437.0,161.1 438.0,161.1 438.5,159.8 439.0,156.7 439.5,153.4 440.0,156.3 440.5,159.9 441.0,162.2 442.0,162.2 442.5,161.9 443.0,159.9 443.5,158.5 444.0,160.4 444.5,162.2 446.0,162.2 446.5,156.1 447.0,150.9 447.5,149.0 448.0,154.1 448.5,158.1 449.0,161.7 450.0,161.7 450.5,160.6 451.0,158.5 451.5,158.5 452.0,160.6 452.5,161.7 453.5,161.7 454.0,159.7 454.5,157.0 455.0,153.3 455.5,154.6 456.5,162.2 458.0,162.2 458.5,160.4 459.0,158.5 459.5,159.9 460.0,161.9 460.5,162.2 461.5,162.2 462.0,156.0 462.5,149.4 463.0,144.2 463.5,150.2 464.0,156.1 464.5,161.1 465.5,161.1 466.0,160.5 466.5,157.8 467.0,156.5 467.5,159.1 468.0,161.1 469.0,161.1 469.5,160.3 470.0,158.8 470.5,155.5 471.0,155.1 471.5,158.3 472.0,160.7 472.5,162.2 473.5,162.2 474.0,160.9 474.5,159.1 475.0,159.6 475.5,161.4 476.0,162.2 477.0,162.2 477.5,159.0 478.0,154.9 478.5,150.7 479.0,153.3 479.5,157.9 480.0,161.7 481.5,161.7 482.0,159.4 482.5,157.2 483.0,159.4 483.5,161.7 485.0,161.7 485.5,156.0 486.0,150.0 486.5,146.6 487.0,152.2 487.5,157.3 488.0,162.2 489.0,162.2 489.5,161.4 490.0,159.5 490.5,159.0 491.0,160.9 491.5,162.2 492.5,162.2 493.0,160.3 493.5,158.0 494.0,154.5 494.5,154.9 495.0,158.4 495.5,160.1 496.0,161.7 497.0,161.7 497.5,160.2 498.0,158.2 498.5,159.2 499.0,161.3 499.5,161.7 500.5,161.7 501.0,158.3 501.5,154.0 502.0,149.6 502.5,153.4 503.0,158.3 503.5,162.2 504.5,162.2 505.0,162.0 505.5,160.1 506.0,158.8 506.5,160.6 507.0,162.2 508.5,162.2 509.0,158.5 509.5,154.8 510.0,153.5 510.5,157.1 511.0,159.7 511.5,161.7 512.5,161.7 513.0,160.4 513.5,158.2 514.0,158.2 514.5,160.4 515.0,161.7 516.0,161.7 516.5,157.7 517.0,153.6 517.5,148.4 518.0,150.3 518.5,155.8 519.0,161.1 520.5,161.1 521.0,159.1 521.5,156.7 522.0,158.5 L522.0,170.8 521.5,172.6 521.0,170.2 520.5,168.1 519.0,168.1 518.5,173.4 518.0,178.8 517.5,180.7 517.0,175.5 516.0,167.5 515.0,167.5 514.5,168.7 514.0,170.9 513.5,170.9 513.0,168.7 512.5,167.5 511.5,167.5 511.0,169.5 510.5,172.7 510.0,176.6 509.5,175.2 509.0,171.1 508.5,167.0 507.0,167.0 506.5,168.6 506.0,170.3 505.5,169.0 505.0,167.2 504.5,167.0 503.5,167.0 503.0,171.4 502.5,176.6 502.0,180.7 501.5,176.0 501.0,170.9 500.5,167.5 499.5,167.5 499.0,167.9 498.5,170.1 498.0,171.1 497.5,169.0 497.0,167.5 496.0,167.5 495.5,169.1 495.0,170.7 494.5,174.2 494.0,174.6 493.5,171.2 493.0,168.9 492.5,167.0 491.5,167.0 491.0,168.3 490.5,170.2 490.0,169.7 489.5,167.8 489.0,167.0 488.0,167.0 487.5,171.9 486.5,183.5 486.0,179.9 485.5,173.7 485.0,167.5 484.0,167.5 483.5,167.6 483.0,170.0 482.5,172.2 482.0,170.0 481.5,167.6 481.0,167.5 480.0,167.5 479.5,171.4 479.0,176.0 478.5,178.7 478.0,174.4 477.5,170.2 477.0,167.0 476.0,167.0 475.5,167.9 475.0,169.8 474.5,170.3 474.0,168.4 473.5,167.0 472.5,167.0 472.0,168.5 471.5,170.6 471.0,173.7 470.5,173.4 470.0,170.2 469.5,168.9 469.0,168.1 468.0,168.1 467.5,169.7 467.0,172.0 466.5,170.9 466.0,168.4 465.5,168.1 464.5,168.1 464.0,173.1 463.5,179.4 463.0,185.6 462.5,180.2 462.0,173.4 461.5,167.0 460.5,167.0 460.0,167.3 459.5,169.2 459.0,170.5 458.0,167.0 456.5,167.0 456.0,170.6 455.5,174.3 455.0,175.6 454.5,172.1 454.0,169.5 453.5,167.5 452.5,167.5 452.0,168.4 451.5,170.5 451.0,170.5 450.5,168.4 450.0,167.5 449.0,167.5 448.5,171.1 448.0,174.8 447.5,179.7 447.0,177.9 446.5,172.8 446.0,167.0 444.5,167.0 444.0,168.6 443.5,170.4 443.0,169.1 442.5,167.2 442.0,167.0 441.0,167.0 440.5,169.3 440.0,172.9 439.5,175.8 439.0,172.5 438.5,169.4 438.0,168.1 437.0,168.1 436.5,168.4 436.0,170.9 435.5,172.1 435.0,169.7 434.5,168.1 433.5,168.1 433.0,171.9 432.5,174.6 432.0,180.3 431.5,180.9 431.0,175.4 430.5,171.6 430.0,167.0 429.0,167.0 428.5,168.2 428.0,169.9 427.5,169.5 427.0,167.7 426.5,167.0 425.5,167.0 425.0,169.8 424.5,173.3 424.0,177.2 423.5,174.8 423.0,170.7 422.5,168.1 421.0,168.1 420.5,170.8 420.0,173.3 419.5,170.8 419.0,168.1 418.0,168.1 417.5,169.0 417.0,171.5 416.5,171.8 416.0,169.3 415.5,168.1 414.5,168.1 414.0,170.5 413.5,173.8 413.0,178.4 412.5,177.3 412.0,172.6 411.5,167.0 410.0,167.0 409.5,168.8 409.0,170.6 408.5,169.5 408.0,167.5 407.5,167.0 406.5,167.0 406.0,169.3 405.5,173.1 405.0,176.5 404.5,173.1 404.0,169.4 403.5,168.1 402.5,168.1 402.0,168.6 401.5,171.3 401.0,172.8 400.5,170.3 400.0,168.1 398.5,168.1 398.0,174.5 397.5,180.3 397.0,181.7 396.5,176.0 396.0,171.9 395.5,167.5 394.5,167.5 394.0,168.6 393.5,170.7 393.0,170.4 392.5,168.3 392.0,167.5 391.0,167.5 390.5,169.6 390.0,172.8 389.5,176.6 389.0,174.8 388.5,170.8 388.0,167.0 386.5,167.0 386.0,169.0 385.5,170.9 385.0,169.3 384.5,167.2 384.0,167.0 383.0,167.0 382.5,171.8 382.0,177.1 381.5,180.7 381.0,175.8 380.5,171.2 380.0,167.5 379.0,167.5 378.5,168.3 378.0,170.7 377.5,171.5 377.0,169.2 376.5,167.5 375.5,167.5 375.0,169.1 374.5,170.8 374.0,174.2 373.5,174.2 373.0,170.8 372.0,167.0 371.0,167.0 370.5,168.5 370.0,170.3 369.5,169.7 369.0,167.7 368.5,167.0 367.5,167.0 367.0,167.8 366.5,170.1 366.0,172.4 365.5,170.7 365.0,168.1 364.5,168.1 364.0,170.3 363.5,175.0 363.0,179.0 362.5,174.8 362.0,170.2 361.5,168.1 361.0,170.7 360.5,173.2 360.0,171.0 359.5,168.2 359.0,167.5 358.5,169.4 358.0,170.3 357.5,168.9 357.0,174.1 356.5,180.1 356.0,180.4 355.5,189.5 355.0,191.4 354.5,182.5 354.0,183.2 353.0,186.1 352.5,188.9 352.0,184.6 351.5,185.1 351.0,183.1 350.5,184.2 350.0,184.4 349.5,179.9 349.0,178.2 348.5,173.0 348.0,170.4 347.5,172.0 347.0,175.8 346.5,175.1 346.0,171.3 345.5,170.4 345.0,172.3 344.5,177.8 344.0,181.6 343.5,176.5 343.0,170.7 342.5,166.4 342.0,166.4 341.5,166.7 341.0,168.3 340.5,169.5 340.0,168.0 339.5,166.4 339.0,171.8 338.5,174.1 338.0,178.8 337.5,178.1 337.0,182.5 336.5,180.6 336.0,178.9 335.5,180.8 335.0,185.0 334.5,179.5 334.0,182.5 333.5,178.1 333.0,184.5 332.5,194.1 332.0,190.6 331.5,180.7 331.0,173.3 330.5,170.4 330.0,171.3 329.5,170.8 329.0,168.5 328.5,167.8 328.0,169.3 327.5,168.7 327.0,167.1 326.5,170.7 326.0,179.0 325.5,186.2 325.0,184.4 324.5,177.1 324.0,169.8 323.5,172.2 323.0,171.2 322.5,168.6 322.0,172.9 321.5,179.5 321.0,185.1 320.5,179.1 320.0,172.5 319.5,172.6 319.0,183.2 318.5,196.1 318.0,203.8 317.5,191.8 317.0,178.2 316.5,170.3 316.0,169.3 315.5,170.8 315.0,169.0 314.5,167.0 314.0,167.2 313.5,170.6 313.0,173.6 312.5,172.9 312.0,169.8 311.5,166.1 311.0,166.1 310.0,166.1 309.5,166.6 309.0,166.5 308.5,166.1 307.0,166.1 306.5,166.2 306.0,167.9 305.5,169.3 305.0,168.5 304.5,166.9 304.0,173.6 303.5,180.4 303.0,185.4 302.5,179.2 302.0,172.3 301.5,169.2 301.0,172.3 300.5,175.3 300.0,172.2 299.5,169.2 299.0,175.4 298.5,184.8 298.0,193.2 297.5,185.9 297.0,176.6 296.5,173.2 296.0,189.1 295.5,202.6 295.0,203.4 294.5,190.0 294.0,174.3 293.5,174.7 293.0,180.6 292.5,181.8 292.0,176.0 291.5,169.4 291.0,178.6 290.5,187.3 290.0,190.3 289.5,182.0 289.0,175.0 288.5,172.2 288.0,178.5 287.5,184.6 287.0,180.5 286.5,173.9 286.0,172.6 285.5,175.2 285.0,180.0 284.5,177.5 284.0,172.6 283.5,173.2 283.0,183.6 282.5,192.7 282.0,189.4 281.5,179.9 281.0,172.8 280.5,170.7 280.0,168.1 279.5,169.2 279.0,176.2 278.5,182.2 278.0,181.5 277.5,175.4 277.0,173.8 276.5,183.9 276.0,194.4 275.5,194.7 275.0,184.2 274.5,178.3 274.0,185.3 273.5,184.3 273.0,177.1 272.5,172.9 272.0,172.2 271.5,176.3 271.0,176.3 270.5,172.2 270.0,170.2 269.5,175.9 269.0,180.9 268.5,177.8 268.0,172.5 267.5,166.7 267.0,168.3 266.5,169.4 266.0,167.9 265.5,166.6 265.0,168.5 264.5,170.3 264.0,169.1 263.5,167.3 263.0,167.0 262.5,173.8 262.0,181.5 261.5,188.4 261.0,182.0 260.5,174.3 260.0,173.6 259.5,179.3 259.0,181.6 258.5,176.2 258.0,170.0 257.5,168.2 257.0,170.7 256.5,172.1 256.0,169.8 255.5,168.9 255.0,176.1 254.5,182.3 254.0,182.1 253.5,175.9 253.0,172.5 252.5,171.7 252.0,180.8 251.5,188.7 251.0,186.3 250.5,178.1 250.0,171.9 249.5,170.1 249.0,168.5 248.5,170.2 248.0,169.2 247.5,167.3 247.0,167.0 246.5,169.5 246.0,173.9 245.5,177.7 245.0,174.4 244.5,170.1 244.0,167.0 243.5,167.3 243.0,169.3 242.5,170.9 242.0,169.0 241.5,166.9 241.0,166.4 240.5,166.9 240.0,168.5 239.5,169.3 239.0,167.8 238.5,166.9 238.0,168.9Z"/><path fill="#00ff00" d="M522.0,158.5 522.5,161.1 523.0,161.1 524.0,161.1 524.5,159.8 525.0,156.4 525.5,153.6 526.0,156.8 526.5,160.1 527.0,162.2 528.0,162.2 528.5,161.7 529.0,159.9 529.5,159.0 530.0,160.8 530.5,162.2 531.5,162.2 532.0,159.2 532.5,156.2 533.0,151.5 533.5,150.9 534.0,155.6 534.5,158.9 535.0,161.7 536.0,161.7 536.5,160.4 537.0,158.3 537.5,158.8 538.0,161.0 538.5,161.7 539.5,161.7 540.0,160.4 540.5,157.8 541.0,154.8 541.5,156.7 542.0,159.9 542.5,162.2 544.0,162.2 544.5,160.5 545.0,158.8 545.5,160.5 546.0,162.2 547.5,162.2 548.0,158.3 548.5,154.0 549.0,151.6 549.5,155.6 550.0,159.2 550.5,161.7 551.5,161.7 552.0,161.0 552.5,158.8 553.0,158.3 553.5,160.4 554.0,161.7 555.0,161.7 555.5,160.1 556.0,158.2 556.5,154.9 557.0,155.3 557.5,158.7 558.0,161.1 559.0,161.1 559.5,158.9 560.0,156.6 560.5,158.9 561.0,161.1 562.5,161.1 563.0,159.1 563.5,155.3 564.0,153.1 564.5,156.7 565.0,159.8 565.5,162.2 566.5,162.2 567.0,161.5 567.5,159.7 568.0,159.2 568.5,161.0 569.0,162.2 570.0,162.2 570.5,160.7 571.0,158.5 571.5,155.3 572.0,155.7 572.5,158.9 573.0,159.3 573.5,159.1 574.0,154.4 574.5,149.6 575.0,151.5 575.5,156.6 576.0,157.5 576.5,150.5 577.0,143.5 577.5,145.1 578.0,152.4 578.5,158.3 579.0,156.4 579.5,157.1 580.0,150.8 580.5,145.3 581.0,150.7 581.5,156.9 582.0,162.8 582.5,162.8 583.0,161.5 583.5,160.6 584.0,161.8 584.5,163.1 585.0,163.1 585.5,159.4 586.0,156.1 586.5,154.6 587.0,157.8 587.5,161.4 588.0,161.8 588.5,160.3 589.0,156.5 589.5,140.8 590.0,127.6 590.5,126.4 591.0,139.5 591.5,154.8 592.0,161.9 592.5,160.3 593.0,160.0 593.5,161.5 594.0,162.0 594.5,158.7 595.0,155.9 595.5,157.0 596.0,159.9 596.5,160.0 597.0,153.6 597.5,148.1 598.0,149.3 598.5,154.9 599.0,160.9 599.5,159.1 600.0,159.8 600.5,151.1 601.0,141.9 601.5,136.6 602.0,145.2 602.5,155.0 603.0,157.3 603.5,155.0 604.0,146.6 604.5,139.1 605.0,145.6 605.5,153.9 606.0,162.1 606.5,161.2 607.0,159.3 607.5,159.2 608.0,161.1 608.5,162.8 609.0,162.0 609.5,160.4 610.0,160.1 610.5,161.6 611.0,159.9 611.5,157.3 612.0,157.2 612.5,142.1 613.0,128.8 613.5,125.2 614.0,138.2 614.5,140.2 615.0,134.8 615.5,134.8 616.0,139.4 616.5,143.9 617.0,138.9 617.5,131.5 618.0,133.6 618.5,142.2 619.0,132.0 619.5,134.9 620.0,146.0 620.5,157.4 621.0,155.3 621.5,158.1 622.0,156.6 622.5,158.0 623.0,160.6 623.5,162.5 624.0,160.9 624.5,159.7 625.0,161.2 625.5,162.8 626.0,162.8 626.5,161.2 627.0,159.0 627.5,157.9 628.0,160.0 628.5,162.2 629.0,161.8 629.5,159.8 630.0,158.6 630.5,160.4 631.0,158.7 631.5,148.4 632.0,139.5 632.5,138.9 633.0,147.8 633.5,158.2 634.0,160.7 634.5,158.5 635.0,158.0 635.5,160.2 636.0,161.7 636.5,160.4 637.0,153.6 637.5,147.8 638.0,148.1 638.5,154.0 639.0,159.8 639.5,157.5 640.0,153.4 640.5,143.0 641.0,133.7 641.5,140.9 642.0,150.9 642.5,160.0 643.0,160.0 643.5,156.9 644.0,154.0 644.5,157.1 645.0,160.0 645.5,160.0 646.0,155.4 646.5,149.0 647.0,145.2 647.5,151.1 648.0,157.9 648.5,160.0 649.0,159.4 649.5,156.2 650.0,155.0 650.5,158.1 651.0,160.0 652.0,160.0 652.5,154.3 653.0,147.8 653.5,145.1 654.0,151.3 654.5,158.5 655.0,159.5 655.5,156.9 656.0,157.3 656.5,155.5 657.0,144.5 657.5,135.0 658.0,138.4 658.5,148.4 659.0,160.6 659.5,162.2 660.0,160.4 660.5,158.6 661.0,159.8 661.5,161.7 662.0,162.2 662.5,161.4 663.0,158.8 663.5,156.4 664.0,158.6 664.5,161.1 665.0,161.1 665.5,158.4 666.0,153.8 666.5,150.6 667.0,154.8 667.5,149.7 668.0,139.6 668.5,134.2 669.0,143.6 669.5,154.3 670.0,152.7 670.5,146.3 671.0,135.2 671.5,131.9 672.0,142.6 672.5,145.9 673.0,135.4 673.5,134.2 674.0,144.5 674.5,156.6 675.0,156.6 675.5,154.7 676.0,149.6 676.5,150.3 677.0,155.5 677.5,154.6 678.0,157.3 678.5,153.3 679.0,153.3 679.5,157.3 680.0,156.0 680.5,147.2 681.0,139.4 681.5,144.2 682.0,152.5 682.5,161.1 683.0,160.7 683.5,157.4 684.0,154.4 684.5,157.1 685.0,159.3 685.5,153.3 686.0,142.8 686.5,133.4 687.0,140.3 687.5,150.5 688.0,159.4 688.5,158.2 689.0,154.5 689.5,153.9 690.0,157.5 690.5,161.7 691.0,162.0 691.5,160.4 692.0,159.8 692.5,161.4 693.0,162.8 693.5,160.7 694.0,158.1 694.5,157.0 695.0,159.4 695.5,162.1 696.0,160.9 696.5,159.0 697.0,159.2 697.5,161.1 698.0,159.9 698.5,155.4 699.0,151.5 699.5,154.4 700.0,158.7 700.5,160.2 701.0,158.7 701.5,160.4 702.0,158.1 702.5,153.5 703.0,150.5 703.5,154.7 704.0,159.6 704.5,163.0 705.0,161.8 705.5,160.8 706.0,161.9 706.5,160.5 707.0,157.6 707.5,155.8 708.0,158.5 708.5,160.5 709.0,157.6 709.5,153.8 710.0,153.6 710.5,157.4 711.0,158.8 711.5,158.2 712.0,154.8 712.5,149.8 713.0,150.9 713.5,155.9 714.0,156.5 714.5,150.6 715.0,143.2 715.5,143.6 716.0,151.1 716.5,159.5 717.0,157.0 717.5,157.6 718.0,158.6 718.5,151.5 719.0,145.4 719.5,148.0 720.0,154.5 720.5,158.0 721.0,156.6 721.5,156.9 722.0,151.0 722.5,146.6 723.0,151.9 723.5,157.9 724.0,157.2 724.5,158.2 725.0,153.9 725.5,151.7 726.0,155.7 726.5,160.3 727.0,161.5 727.5,161.1 728.0,158.1 728.5,143.9 729.0,132.0 729.5,129.9 730.0,141.6 730.5,155.1 731.0,159.3 731.5,159.3 732.0,161.2 732.5,158.6 733.0,155.6 733.5,156.1 734.0,159.2 734.5,161.6 735.0,160.1 735.5,160.0 736.0,151.9 736.5,138.4 737.0,126.5 737.5,133.1 738.0,145.7 738.5,147.2 739.0,134.3 739.5,124.7 740.0,136.6 740.5,148.3 741.0,137.1 741.5,130.7 742.0,141.1 742.5,153.0 743.0,156.1 743.5,149.9 744.0,145.5 744.5,151.2 745.0,157.6 745.5,162.2 746.0,161.7 746.5,159.8 747.0,159.0 747.5,160.7 748.0,162.2 748.5,162.2 749.0,158.6 749.5,155.1 750.0,154.4 750.5,157.2 751.0,156.5 751.5,156.3 752.0,152.8 752.5,151.2 753.0,155.1 753.5,155.3 754.0,155.0 754.5,155.2 755.0,155.8 755.5,156.9 756.0,156.9 756.5,153.9 757.0,155.2 757.5,157.8 758.0,157.4 758.5,157.8 759.0,160.6 759.5,156.9 760.0,150.0 760.5,143.8 761.0,148.8 761.5,155.5 762.0,161.8 762.5,160.7 763.0,159.9 763.5,147.9 764.0,135.5 764.5,126.4 765.0,137.7 765.5,150.5 766.0,161.3 766.5,160.4 767.0,158.8 767.5,160.5 768.0,162.2 768.5,160.3 769.0,157.6 769.5,156.8 770.0,156.8 770.5,148.7 771.0,139.6 771.5,138.3 772.0,144.2 772.5,131.5 773.0,126.7 773.5,138.9 774.0,152.8 774.5,149.9 775.0,142.5 775.5,144.1 776.0,151.6 776.5,160.7 777.0,162.2 777.5,161.2 778.0,162.0 778.5,163.1 779.0,161.7 779.5,158.8 780.0,156.3 780.5,158.0 781.0,160.7 781.5,161.1 782.0,158.8 782.5,153.9 783.0,149.6 783.5,153.8 784.0,158.6 784.5,162.9 785.0,161.8 785.5,161.4 786.0,159.8 786.5,151.2 787.0,143.4 787.5,141.8 788.0,149.4 788.5,158.2 789.0,162.8 789.5,161.7 790.0,161.4 790.5,160.5 791.0,158.8 791.5,152.7 792.0,146.7 792.5,148.2 793.0,154.3 793.5,159.5 794.0,159.5 794.5,153.7 795.0,147.3 795.5,145.8 796.0,152.0 796.5,159.2 797.0,160.0 797.5,159.2 798.0,156.4 798.5,156.5 799.0,159.3 799.5,161.0 800.0,160.8 800.5,159.0 801.0,156.3 801.5,157.1 802.0,160.0 802.5,163.1 803.0,162.5 803.5,161.7 804.0,162.5 804.5,163.1 805.0,163.1 805.5,162.0 806.0,159.5 806.5,159.7 807.0,158.7 807.5,160.2 808.0,161.1 808.5,159.6 809.0,160.6 809.5,161.9 810.0,162.7 810.5,163.1 843.5,163.1 844.0,162.6 L844.0,166.7 843.5,166.1 810.5,166.1 810.0,166.4 809.5,167.3 809.0,168.5 808.5,169.5 808.0,168.0 807.5,169.0 807.0,170.5 806.5,169.5 806.0,169.7 805.5,167.2 805.0,166.1 804.5,166.1 804.0,166.6 803.5,167.4 803.0,166.6 802.5,166.1 802.0,169.1 801.5,171.8 801.0,172.6 800.5,170.0 800.0,168.5 799.5,168.2 799.0,169.6 798.5,172.2 798.0,172.3 797.5,169.6 797.0,169.2 796.5,170.0 796.0,177.3 795.5,183.6 795.0,182.0 794.5,175.6 794.0,169.6 793.5,169.6 793.0,175.0 792.5,181.1 792.0,182.6 791.5,176.6 791.0,170.5 790.5,168.8 790.0,167.7 789.5,167.4 789.0,166.3 788.5,171.4 788.0,180.8 787.5,189.0 787.0,187.2 786.5,178.9 786.0,169.7 785.5,167.8 785.0,167.4 784.5,166.3 784.0,170.7 783.5,175.6 783.0,179.8 782.5,175.4 782.0,170.5 781.5,168.1 781.0,168.4 780.5,171.1 780.0,172.7 779.5,170.3 779.0,167.5 778.5,166.1 778.0,167.2 777.5,168.1 777.0,167.1 776.5,168.6 776.0,177.6 775.5,185.2 775.0,186.8 774.5,179.4 774.0,176.4 773.5,190.4 773.0,202.6 772.5,197.8 772.0,185.0 771.5,192.4 771.0,190.9 770.5,181.4 770.0,172.0 769.5,172.1 769.0,171.3 768.5,168.8 768.0,167.0 767.5,169.0 767.0,170.8 766.5,169.1 766.0,167.6 765.5,177.5 765.0,189.3 764.5,199.7 764.0,191.3 763.5,179.9 763.0,169.2 762.5,168.5 762.0,167.4 761.5,173.7 761.0,180.4 760.5,185.4 760.0,179.2 759.5,172.3 759.0,168.4 758.5,171.4 758.0,171.8 757.5,171.4 757.0,174.0 756.5,175.4 756.0,172.3 755.5,172.3 755.0,173.4 754.5,174.0 754.0,174.2 753.5,173.9 753.0,174.1 752.5,178.3 752.0,176.7 751.5,172.9 751.0,172.7 750.5,172.0 750.0,174.8 749.5,174.0 749.0,170.6 748.5,167.0 748.0,167.0 747.5,168.5 747.0,170.3 746.5,169.4 746.0,167.5 745.5,167.0 745.0,171.3 744.5,177.6 744.0,183.1 743.5,178.8 743.0,172.8 742.5,176.3 742.0,188.1 741.5,198.6 741.0,192.2 740.5,181.0 740.0,192.3 739.5,204.0 739.0,194.6 738.5,181.8 738.0,183.7 737.5,196.4 737.0,203.0 736.5,191.0 736.0,177.4 735.5,169.0 735.0,169.4 734.5,167.8 734.0,170.0 733.5,173.0 733.0,173.6 732.5,170.6 732.0,168.0 731.5,169.8 731.0,169.8 730.5,173.8 730.0,186.8 729.5,198.0 729.0,196.0 728.5,184.5 728.0,170.8 727.5,168.3 727.0,167.8 726.5,168.9 726.0,173.4 725.5,177.3 725.0,175.2 724.5,170.9 724.0,171.5 723.5,171.2 723.0,177.0 722.5,182.2 722.0,177.8 721.5,172.1 721.0,172.6 720.5,171.1 720.0,174.5 719.5,180.7 719.0,183.3 718.5,177.3 718.0,170.5 717.5,171.1 717.0,171.7 716.5,169.3 716.0,177.6 715.5,184.8 715.0,185.2 714.5,178.1 714.0,173.0 713.5,173.2 713.0,178.2 712.5,179.3 712.0,174.4 711.5,171.4 711.0,170.7 710.5,171.6 710.0,175.3 709.5,175.1 709.0,171.3 708.5,168.7 708.0,170.7 707.5,173.4 707.0,171.6 706.5,168.7 706.0,167.5 705.5,168.6 705.0,167.6 704.5,166.3 704.0,170.0 703.5,175.2 703.0,179.8 702.5,176.5 702.0,171.6 701.5,168.7 701.0,170.4 700.5,168.9 700.0,170.6 699.5,174.9 699.0,177.8 698.5,173.8 698.0,169.4 697.5,167.9 697.0,169.8 696.5,170.0 696.0,168.2 695.5,167.1 695.0,169.8 694.5,172.3 694.0,171.1 693.5,168.5 693.0,166.4 692.5,167.6 692.0,169.1 691.5,168.6 691.0,167.1 690.5,167.5 690.0,171.6 689.5,175.1 689.0,174.5 688.5,170.9 688.0,169.8 687.5,177.7 687.0,187.2 686.5,193.7 686.0,184.9 685.5,175.1 685.0,170.4 684.5,172.5 684.0,175.3 683.5,172.2 683.0,168.7 682.5,168.1 682.0,177.0 681.5,185.5 681.0,190.3 680.5,182.4 680.0,173.4 679.5,172.3 679.0,176.4 678.5,176.4 678.0,172.3 677.5,174.6 677.0,173.5 676.5,178.2 676.0,178.9 675.5,174.1 675.0,172.6 674.5,173.1 674.0,186.0 673.5,197.1 673.0,195.8 672.5,184.6 672.0,185.9 671.5,196.3 671.0,193.1 670.5,182.4 670.0,175.5 669.5,175.3 669.0,186.5 668.5,196.3 668.0,190.5 667.5,180.1 667.0,175.2 666.5,179.7 666.0,176.2 665.5,171.3 665.0,168.1 664.5,168.1 664.0,170.5 663.5,172.7 663.0,170.3 662.5,167.7 662.0,167.0 661.5,167.5 661.0,169.5 660.5,170.7 659.5,167.0 659.0,168.8 658.5,181.5 658.0,192.0 657.5,195.6 657.0,185.6 656.5,174.1 656.0,171.8 655.5,172.3 655.0,169.7 654.5,170.3 654.0,177.0 653.5,182.8 653.0,180.3 652.5,174.2 652.0,169.2 651.0,169.2 650.5,170.8 650.0,173.8 649.5,172.7 649.0,169.6 648.5,169.2 648.0,171.3 647.5,178.0 647.0,183.9 646.5,180.1 646.0,173.7 645.5,169.2 645.0,169.2 644.5,171.8 644.0,174.8 643.5,172.0 643.0,169.2 642.5,169.2 642.0,178.3 641.5,188.4 641.0,195.5 640.5,186.3 640.0,175.9 639.5,171.9 639.0,169.5 638.5,174.6 638.0,180.2 637.5,180.5 637.0,175.0 636.5,168.6 636.0,167.5 635.5,168.8 635.0,170.9 634.5,170.5 634.0,168.3 633.5,171.1 633.0,181.6 632.5,190.5 632.0,190.0 631.5,181.0 631.0,170.3 630.5,168.7 630.0,170.5 629.5,169.3 629.0,167.4 628.5,167.0 628.0,169.3 627.5,171.5 627.0,170.4 626.5,168.1 626.0,166.4 625.5,166.4 625.0,168.0 624.5,169.4 624.0,168.3 623.5,166.7 623.0,168.7 622.5,171.4 622.0,172.8 621.5,170.8 621.0,173.4 620.5,171.4 620.0,183.6 619.5,194.9 619.0,197.8 618.5,187.0 618.0,195.6 617.5,196.1 617.0,190.3 616.5,185.3 616.0,189.8 615.5,194.4 615.0,194.4 614.5,189.0 614.0,191.1 613.5,204.1 613.0,200.6 612.5,187.1 612.0,172.0 611.5,171.9 611.0,169.3 610.5,167.4 610.0,168.9 609.5,168.6 609.0,167.1 608.5,166.4 608.0,168.1 607.5,170.0 607.0,169.9 606.5,168.0 606.0,167.1 605.5,175.4 605.0,183.7 604.5,190.3 604.0,182.7 603.5,174.3 603.0,172.4 602.5,174.4 602.0,184.4 601.5,193.2 601.0,187.8 600.5,178.4 600.0,169.3 599.5,170.0 599.0,168.2 598.5,174.3 598.0,179.9 597.5,181.1 597.0,175.6 596.5,169.2 596.0,169.5 595.5,172.5 595.0,173.5 594.5,170.6 594.0,167.3 593.5,167.7 593.0,169.3 592.5,168.9 592.0,167.3 591.5,174.7 591.0,190.5 590.5,204.1 590.0,202.9 589.5,189.2 589.0,173.0 588.5,169.0 588.0,167.5 587.5,167.8 587.0,171.4 586.5,174.6 586.0,173.2 585.5,169.8 585.0,166.1 584.5,166.1 584.0,167.3 583.5,168.4 583.0,167.6 582.5,166.3 582.0,166.5 581.5,173.0 581.0,179.7 580.5,185.5 580.0,179.5 579.5,172.7 579.0,172.8 578.5,170.9 578.0,175.9 577.5,182.5 577.0,184.1 576.5,177.6 576.0,171.6 575.5,172.8 575.0,177.9 574.5,179.8 574.0,174.9 573.5,170.1 573.0,169.8 572.5,170.3 572.0,173.5 571.5,173.8 571.0,170.7 570.5,168.5 570.0,167.0 569.0,167.0 568.5,168.2 568.0,169.9 567.5,169.5 567.0,167.7 566.5,167.0 565.5,167.0 565.0,169.4 564.5,172.5 564.0,176.1 563.5,173.9 563.0,170.1 562.5,168.1 561.0,168.1 560.0,172.8 559.0,168.1 558.0,168.1 557.5,170.7 557.0,174.1 556.5,174.5 556.0,171.1 555.5,169.1 555.0,167.5 554.0,167.5 553.5,168.9 553.0,171.1 552.5,170.5 552.0,168.3 551.5,167.5 550.5,167.5 550.0,170.0 549.5,173.6 549.0,177.7 548.5,175.2 548.0,170.9 547.5,167.0 546.0,167.0 545.5,168.9 545.0,170.7 544.5,168.9 544.0,167.0 542.5,167.0 542.0,169.3 541.5,172.6 541.0,174.4 540.5,171.4 540.0,168.8 539.5,167.5 538.5,167.5 538.0,168.5 537.5,170.8 537.0,171.4 536.5,169.1 536.0,167.5 535.0,167.5 534.5,170.3 534.0,173.2 533.5,177.7 533.0,177.2 532.5,172.6 532.0,170.0 531.5,167.0 530.5,167.0 530.0,168.7 529.5,170.6 529.0,169.6 528.5,167.7 528.0,167.0 527.0,167.0 526.5,169.1 526.0,172.6 525.5,175.9 525.0,173.0 524.5,169.4 524.0,168.1 523.0,168.1 522.5,168.2 522.0,170.8Z"/>
<rect x="0" y="109" width="844" height="1" fill="#fff"/>
<line x1="237.1" y1="0.5" x2="237.1" y2="219" stroke="#cbb936" stroke-width="1.5" stroke-dasharray="2.8 1.2" stroke-linecap="butt"/>
<text x="8" y="17" fill="#fff" font-family="Liberation Sans, sans-serif" font-size="12">Channel 0</text>
<text x="8" y="126" fill="#fff" font-family="Liberation Sans, sans-serif" font-size="12">Channel 1</text>
</svg>
<div class="abs sb"></div>
<svg class="abs" style="left:0;top:0" width="896" height="563" viewBox="0 0 896 563">
<!-- app icon -->
<ellipse cx="21.4" cy="17.6" rx="6.5" ry="5.6" fill="#dcdcdc" stroke="#a4a4a4" stroke-width="0.9"/>
<ellipse cx="21.2" cy="17.9" rx="4" ry="3" fill="#8a8a8a"/>
<ellipse cx="21.4" cy="18.6" rx="2.6" ry="1.7" fill="#b4b4b4"/>
<path fill="#4bb32e" stroke="#2f8f1a" stroke-width="0.5" stroke-linejoin="round" d="M22.4,20.4 L29.4,18.5 L29.4,25.3 A1.9,1.7 0 1 1 27.9,23.8 L27.9,21.2 L23.9,22.3 L23.9,26 A1.9,1.7 0 1 1 22.4,24.6 Z"/>
<!-- window buttons -->
<rect x="771" y="20" width="10" height="1" fill="#000"/>
<rect x="816.5" y="15.5" width="9" height="9" fill="none" stroke="#c4c4c4" stroke-width="1"/>
<path d="M862,15 L872,25 M872,15 L862,25" stroke="#000" stroke-width="1.1" fill="none"/>
<!-- markers -->
<path fill="#ea5400" d="M246,132.4 H260.6 V140.4 L253.3,147.6 L246,140.4 Z"/>
<path fill="#ea5400" d="M530,132.4 H544.6 V140.4 L537.3,147.6 L530,140.4 Z"/>
<path fill="#ea5400" d="M246,402.6 H260.4 V394.6 L253.2,387.4 L246,394.6 Z"/>
<path fill="#ea5400" d="M530,402.6 H544.4 V394.6 L537.2,387.4 L530,394.6 Z"/>
<rect x="19" y="69" width="2" height="2" fill="#a0a0a0"/>
<rect x="19" y="73" width="2" height="2" fill="#a0a0a0"/>
<rect x="19" y="77" width="2" height="2" fill="#a0a0a0"/>
<rect x="19" y="81" width="2" height="2" fill="#a0a0a0"/>
<rect x="19" y="85" width="2" height="2" fill="#a0a0a0"/>
<rect x="19" y="89" width="2" height="2" fill="#a0a0a0"/>
<rect x="19" y="103" width="2" height="2" fill="#a0a0a0"/>
<rect x="19" y="107" width="2" height="2" fill="#a0a0a0"/>
<rect x="19" y="111" width="2" height="2" fill="#a0a0a0"/>
<rect x="19" y="115" width="2" height="2" fill="#a0a0a0"/>
<rect x="19" y="119" width="2" height="2" fill="#a0a0a0"/>
<rect x="88" y="70" width="1" height="22" fill="#b4b4b4"/>
<rect x="178" y="70" width="1" height="22" fill="#b4b4b4"/>
<rect x="240" y="70" width="1" height="22" fill="#b4b4b4"/>
<rect x="330" y="70" width="1" height="22" fill="#b4b4b4"/>
<rect x="392" y="70" width="1" height="22" fill="#b4b4b4"/>
<rect x="252" y="104" width="1" height="20" fill="#b4b4b4"/>
<path fill="none" stroke="#1783ff" stroke-width="1.9" stroke-linejoin="round" stroke-linecap="round" d="M29.9,87.5 L29,86.5 L29,73 Q29,72 30,72 L35.3,72 L38.2,75 L47.3,75"/>
<path fill="none" stroke="#1783ff" stroke-width="1.9" stroke-linejoin="round" stroke-linecap="round" d="M32.4,78.2 L49.6,78.2 L47.2,87.2 Q47,88 46.2,88 L30.6,88 Q29.8,88 30,87.2 Z"/>
<path fill="none" stroke="#1783ff" stroke-width="1.9" stroke-linejoin="round" stroke-linecap="round" stroke-linejoin="miter" d="M59.9,71 L74.6,71 L79,75.4 L79,91.4 L59.9,91.4 Z"/>
<path fill="none" stroke="#1783ff" stroke-width="1.9" stroke-linejoin="round" stroke-linecap="round" stroke-linejoin="miter" d="M64.6,71 L64.6,75 L72.2,75 L72.2,71"/>
<rect fill="none" stroke="#1783ff" stroke-width="1.9" stroke-linejoin="round" stroke-linecap="round" stroke-linejoin="miter" x="64" y="80" width="10" height="7"/>
<circle fill="none" stroke="#1783ff" stroke-width="1.9" stroke-linejoin="round" stroke-linecap="round" cx="98.4" cy="86.8" r="3.5"/><circle fill="none" stroke="#1783ff" stroke-width="1.9" stroke-linejoin="round" stroke-linecap="round" cx="112" cy="86.8" r="3.5"/>
<path fill="none" stroke="#1783ff" stroke-width="1.9" stroke-linejoin="round" stroke-linecap="round" d="M96,69.5 L109.7,84.3 M114.4,69.5 L100.6,84.3"/>
<path fill="none" stroke="#1783ff" stroke-width="1.9" stroke-linejoin="round" stroke-linecap="round" d="M129,72 L125,72 Q124,72 124,73 L124,89.5 Q124,90.5 125,90.5 L138,90.5 Q139,90.5 139,89.5 L139,73 Q139,72 138,72 L134.5,72"/>
<path fill="none" stroke="#1783ff" stroke-width="1.9" stroke-linejoin="round" stroke-linecap="round" d="M129,71.5 Q131.7,69.5 134.5,71.5 L134.5,72.6 L129,72.6 Z" />
<path fill="none" stroke="#1783ff" stroke-width="1.9" stroke-linejoin="round" stroke-linecap="round" d="M133,69.6 L141.2,69.6 Q142.2,69.6 142.2,70.6 L142.2,87 Q142.2,88 141.2,88 L140,88"/>
<path fill="none" stroke="#1783ff" stroke-width="1.6" d="M126.5,76.7 H136.4 M126.5,79.9 H136.4 M126.5,83 H131.6"/>
<path fill="none" stroke="#a8a8a8" stroke-width="1.8" stroke-linejoin="miter" d="M158,88.4 L151.4,88.4 L151.4,73 L166,73 L166,77"/>
<path fill="none" stroke="#a8a8a8" stroke-width="1.8" stroke-linejoin="miter" d="M154.5,73.6 H163" stroke-width="2.6"/>
<path fill="none" stroke="#a8a8a8" stroke-width="1.8" stroke-linejoin="miter" d="M157,72 L157,70.2 L161.2,70.2 L161.2,72"/>
<path fill="none" stroke="#a8a8a8" stroke-width="1.8" stroke-linejoin="miter" d="M159,78.4 L171,78.4 L171,87 L168,90 L159,90 Z"/>
<path fill="none" stroke="#a8a8a8" stroke-width="1.8" stroke-linejoin="miter" stroke-width="1.5" d="M161.5,82.2 H168.6 M161.5,85.8 H165"/>
<path fill="#1783ff" d="M192.4,69.3 L183.5,76.7 L192.4,84.4 L192.4,79.6 L198.5,79.6 A3,3 0 0 1 198.5,85.6 L197,85.6 L197,91 L198.5,91 A8.5,8.5 0 0 0 198.5,74 L192.4,74 Z"/>
<g transform="translate(418.5,0) scale(-1,1)"><path fill="#1783ff" d="M192.4,69.3 L183.5,76.7 L192.4,84.4 L192.4,79.6 L198.5,79.6 A3,3 0 0 1 198.5,85.6 L197,85.6 L197,91 L198.5,91 A8.5,8.5 0 0 0 198.5,74 L192.4,74 Z"/></g>
<circle cx="256.9" cy="71.9" r="2.55" fill="#1783ff"/><circle cx="251" cy="83.8" r="2.55" fill="#1783ff"/><circle cx="263.3" cy="83.8" r="2.55" fill="#1783ff"/>
<path fill="none" stroke="#1783ff" stroke-width="2" stroke-linecap="round" d="M248.9,72.6 L253,76.6 M265.1,72.6 L261,76.6 M257.1,90.2 V84"/>
<path fill="#1783ff" stroke="#1783ff" stroke-width="0.6" stroke-linejoin="round" d="M250.6,78.5 L255.3,79 L254.7,74.2 Z"/>
<path fill="#1783ff" stroke="#1783ff" stroke-width="0.6" stroke-linejoin="round" d="M263.4,78.5 L258.7,79 L259.3,74.2 Z"/>
<path fill="#1783ff" stroke="#1783ff" stroke-width="0.6" stroke-linejoin="round" d="M257.1,81.2 L254.9,84.2 L259.3,84.2 Z"/>
<path fill="none" stroke="#1783ff" stroke-width="2.1" stroke-linejoin="round" stroke-linecap="round" d="M279.8,69 H290.4 M274.8,72.9 H295.4 M277.3,73.2 L277.3,88.8 Q277.3,90.8 279.3,90.8 L291.2,90.8 Q293.2,90.8 293.2,88.8 L293.2,73.2 M282.2,77 V86.8 M288,77 V86.8"/>
<path fill="none" stroke="#1783ff" stroke-width="2.3" stroke-linejoin="round" stroke-linecap="round" d="M302.2,77.4 L303.2,77.4 Q304.6,77.4 304.6,78.8 L304.6,86.6 Q304.6,89.4 307.4,89.4 L319.2,89.4 Q322,89.4 322,86.6 L322,78.8 Q322,77.4 323.4,77.4 L324.2,77.4"/>
<path fill="none" stroke="#1783ff" stroke-width="2.3" stroke-linejoin="round" stroke-linecap="round" stroke-width="2.1" d="M313.2,70.6 V85 M309.6,82.6 L313.2,86 L316.8,82.6"/>
<path fill="#1783ff" d="M309.2,82.4 L313.2,86.6 L317.2,82.4 Z"/>
<circle fill="none" stroke="#1783ff" stroke-width="2.2" cx="347.2" cy="80.2" r="10.5"/>
<path fill="none" stroke="#1783ff" stroke-width="2.1" stroke-linejoin="round" d="M345.2,76.8 L350.8,80.2 L345.2,83.6 Z"/>
<circle fill="none" stroke="#a8a8a8" stroke-width="2.2" cx="375" cy="80.2" r="10.5"/>
<rect fill="none" stroke="#a8a8a8" stroke-width="2.1" x="371.9" y="77.1" width="6.2" height="6.2"/>
<path fill="none" stroke="#1783ff" stroke-width="1.5" stroke-linejoin="round" stroke-linecap="round" d="M398.4,70.5 L400.8,70.5 L401.6,73.6 L404.4,84.8 L418.2,84.8 L419.8,73.6 L401.6,73.6"/>
<path fill="none" stroke="#1783ff" stroke-width="1.3" d="M402.6,77.6 H419.2 M403.6,81.4 H418.6 M408.6,73.6 L408.8,85 M414.4,73.6 L414.2,85"/>
<circle fill="#fff" stroke="#1783ff" stroke-width="1.4" cx="406.3" cy="87.7" r="1.7"/><circle fill="#fff" stroke="#1783ff" stroke-width="1.4" cx="416.2" cy="87.7" r="1.7"/>
<path fill="#d3e3fb" d="M429,90.4 H444.4 V91.6 H429 Z"/>
<path fill="#3c8dff" d="M434.6,88.2 L436.6,90.6 L438.6,88.2 Z"/>
<circle cx="436.6" cy="78.3" r="10.5" fill="#3c8dff"/>
<text x="436.7" y="83.9" text-anchor="middle" text-rendering="geometricPrecision" fill="#fff" font-family="Liberation Sans, sans-serif" font-weight="bold" font-size="15.6">?</text>
<path fill="#fff" stroke="#1783ff" stroke-width="1.3" stroke-linejoin="round" d="M28.9,112.4 C29,109.6 32.4,107.2 36,106.2 L42,106.2 C45.6,107.2 49.8,109.6 50,112.4 L50,118.6 Q50,121.3 47.2,121.3 L31.7,121.3 Q28.9,121.3 28.9,118.6 Z"/>
<path fill="none" stroke="#1783ff" stroke-width="1.1" d="M29.6,111.6 C31.6,109.6 34,108.6 35.6,108.2 M49.4,111.6 C47.4,109.6 44,108.6 42,108.2"/>
<path fill="#efe0fa" stroke="#1783ff" stroke-width="1.2" stroke-linejoin="round" d="M35.8,105.6 L41.8,105.6 L41.8,112.4 Q41.8,113.4 40.8,113.4 L36.8,113.4 Q35.8,113.4 35.8,112.4 Z"/>
<circle cx="38.7" cy="110.3" r="1" fill="#1783ff"/>
<rect x="41.7" y="116.2" width="5.4" height="2.6" rx="1.3" fill="#e0002c" stroke="#b9a3f5" stroke-width="0.8"/>
<path fill="none" stroke="#1783ff" stroke-linecap="round" stroke-linejoin="round" stroke-width="1.5" d="M61.8,106.7 H68.4 M56.2,110.2 H63.2 M59.4,113.9 H66 M62.8,119.9 H69.6"/>
<circle cx="73.6" cy="107.1" r="2" fill="#1783ff"/>
<path fill="none" stroke="#1783ff" stroke-linecap="round" stroke-linejoin="round" stroke-width="2.6" d="M71.4,110 L68.8,115.2"/>
<path fill="none" stroke="#1783ff" stroke-linecap="round" stroke-linejoin="round" stroke-width="1.7" d="M77.8,109.2 L75.6,111 L72.2,110 M70.6,109.6 L67.2,110.4 L66,112.4 M68.8,115.4 L72.8,116.8 L75,121 M68.6,115.4 L66.8,117.2 L63.6,117.4"/>
<path fill="#cfe4ff" stroke="#1783ff" stroke-width="1.6" stroke-linejoin="round" d="M90.8,106.8 L103.7,102.9 L103.7,107.4 L90.8,111.4 Z"/>
<path fill="none" stroke="#1783ff" stroke-width="1.7" d="M90.8,106.8 V119 M103.7,102.9 V117.6"/>
<path fill="none" stroke="#1783ff" stroke-width="1" d="M92.6,113.4 V119.4 M101.6,110.4 V115.4"/>
<circle cx="89.2" cy="121.2" r="2.9" fill="#cfe4ff" stroke="#1783ff" stroke-width="1.6"/>
<circle cx="100.7" cy="118.6" r="2.5" fill="#fff" stroke="#1783ff" stroke-width="1.6"/>
<path fill="none" stroke="#1783ff" stroke-linecap="round" stroke-linejoin="round" stroke-width="2.7" d="M112.5,104.8 H121.4 M112.5,109 H121.4 M112.5,113.3 H117.4"/>
<circle cx="124.2" cy="120" r="3.4" fill="none" stroke="#1783ff" stroke-width="3.6"/>
<path fill="#1783ff" fill-rule="evenodd" d="M125.9,103.2 Q125.9,102.3 126.8,102.3 L134,102.3 Q135,102.3 134.9,103.4 Q134.4,108.6 129.2,111 L129.2,120 L125.9,120 Z M129.2,104.9 L129.2,107.4 Q131.4,106.6 132,105.2 Z"/>
<path fill="#1783ff" stroke="#1783ff" stroke-width="1" stroke-linejoin="round" d="M140.5,110 L146,110 L153.6,105.2 L153.6,122 L146,117.4 L140.5,117.4 Z"/>
<path fill="none" stroke="#1783ff" stroke-linecap="round" stroke-linejoin="round" stroke-width="2.2" d="M156.6,110.6 A3.9,3.9 0 0 1 156.6,116.8 M158.3,107.6 A7.4,7.4 0 0 1 158.3,119.8"/>
<rect x="169.25" y="112.30" width="1.7" height="2.8" fill="#1783ff"/>
<rect x="172.25" y="110.90" width="1.7" height="5.6" fill="#1783ff"/>
<rect x="175.25" y="109.50" width="1.7" height="8.4" fill="#1783ff"/>
<rect x="178.35" y="107.85" width="1.7" height="11.7" fill="#1783ff"/>
<rect x="181.45" y="106.20" width="1.7" height="15" fill="#1783ff"/>
<rect x="184.35" y="104.75" width="1.7" height="17.9" fill="#1783ff"/>
<rect x="187.35" y="103.65" width="1.7" height="20.1" fill="#1783ff"/>
<rect x="197.15" y="103.65" width="1.7" height="20.1" fill="#1783ff"/>
<rect x="200.35" y="104.75" width="1.7" height="17.9" fill="#1783ff"/>
<rect x="203.35" y="106.20" width="1.7" height="15" fill="#1783ff"/>
<rect x="206.25" y="107.85" width="1.7" height="11.7" fill="#1783ff"/>
<rect x="209.25" y="109.50" width="1.7" height="8.4" fill="#1783ff"/>
<rect x="212.25" y="110.90" width="1.7" height="5.6" fill="#1783ff"/>
<rect x="215.15" y="112.30" width="1.7" height="2.8" fill="#1783ff"/>
<path fill="none" stroke="#ea3a56" stroke-width="1.1" stroke-linejoin="round" opacity="0.85" d="M226.4,114.2 L227.6,112.8 L228.6,115 L229.6,112.4 L230.6,114.6 L231.6,113 L232.6,114.8 L233.6,112 L234.4,115.6 L235.2,110 L236,118 L236.8,107.6 L237.6,119.4 L238.4,111 L239.2,115.6 L240,112.4 L241,114.4 L242,112.6 L243,114.2 L244.2,113.4"/>
<circle cx="235.2" cy="113.5" r="10.3" fill="none" stroke="#1783ff" stroke-width="2.2"/>
<path stroke="#1783ff" stroke-width="2" d="M243.6,106.6 L227.6,120.6"/>
<text transform="translate(269.2,109) scale(1.04,0.76)" text-anchor="middle" text-rendering="geometricPrecision" stroke="#e0001c" stroke-width="0.5" fill="#e0001c" font-family="Liberation Serif, serif" font-weight="bold" font-size="10">LPF</text>
<circle cx="259.4" cy="110.6" r="1.5" fill="#1783ff"/>
<circle cx="264.2" cy="110.6" r="1.5" fill="#1783ff"/>
<circle cx="269.0" cy="110.6" r="1.5" fill="#1783ff"/>
<circle cx="273.8" cy="110.6" r="1.5" fill="#1783ff"/>
<circle cx="278.7" cy="110.6" r="1.5" fill="#1783ff"/>
<path fill="none" stroke="#1783ff" stroke-width="1.6" stroke-linejoin="round" d="M257.2,113.6 H281 M258.6,114 L262.2,119 L264.4,119 M279.6,114 L276,119 L273.8,119"/>
<circle cx="267.0" cy="118.4" r="1.5" fill="#1783ff"/>
<circle cx="271.4" cy="118.4" r="1.5" fill="#1783ff"/>
<circle cx="267.0" cy="122.7" r="1.5" fill="#1783ff"/>
<circle cx="271.4" cy="122.7" r="1.5" fill="#1783ff"/>
<text transform="translate(297.2,109) scale(1.04,0.76)" text-anchor="middle" text-rendering="geometricPrecision" stroke="#e0001c" stroke-width="0.5" fill="#e0001c" font-family="Liberation Serif, serif" font-weight="bold" font-size="10">HPF</text>
<circle cx="287.4" cy="110.6" r="1.5" fill="#1783ff"/>
<circle cx="292.2" cy="110.6" r="1.5" fill="#1783ff"/>
<circle cx="297.0" cy="110.6" r="1.5" fill="#1783ff"/>
<circle cx="301.8" cy="110.6" r="1.5" fill="#1783ff"/>
<circle cx="306.7" cy="110.6" r="1.5" fill="#1783ff"/>
<path fill="none" stroke="#1783ff" stroke-width="1.6" stroke-linejoin="round" d="M285.2,113.6 H309 M286.6,114 L290.2,119 L292.4,119 M307.6,114 L304,119 L301.8,119"/>
<circle cx="295.0" cy="118.4" r="1.5" fill="#1783ff"/>
<circle cx="299.4" cy="118.4" r="1.5" fill="#1783ff"/>
<circle cx="295.0" cy="122.7" r="1.5" fill="#1783ff"/>
<circle cx="299.4" cy="122.7" r="1.5" fill="#1783ff"/>
<text transform="translate(325.2,109) scale(1.04,0.76)" text-anchor="middle" text-rendering="geometricPrecision" stroke="#e0001c" stroke-width="0.5" fill="#e0001c" font-family="Liberation Serif, serif" font-weight="bold" font-size="10">BPF</text>
<circle cx="315.4" cy="110.6" r="1.5" fill="#1783ff"/>
<circle cx="320.2" cy="110.6" r="1.5" fill="#1783ff"/>
<circle cx="325.0" cy="110.6" r="1.5" fill="#1783ff"/>
<circle cx="329.8" cy="110.6" r="1.5" fill="#1783ff"/>
<circle cx="334.7" cy="110.6" r="1.5" fill="#1783ff"/>
<path fill="none" stroke="#1783ff" stroke-width="1.6" stroke-linejoin="round" d="M313.2,113.6 H337 M314.6,114 L318.2,119 L320.4,119 M335.6,114 L332,119 L329.8,119"/>
<circle cx="323.0" cy="118.4" r="1.5" fill="#1783ff"/>
<circle cx="327.4" cy="118.4" r="1.5" fill="#1783ff"/>
<circle cx="323.0" cy="122.7" r="1.5" fill="#1783ff"/>
<circle cx="327.4" cy="122.7" r="1.5" fill="#1783ff"/>
<text transform="translate(353.2,109) scale(1.04,0.76)" text-anchor="middle" text-rendering="geometricPrecision" stroke="#e0001c" stroke-width="0.5" fill="#e0001c" font-family="Liberation Serif, serif" font-weight="bold" font-size="10">BRF</text>
<circle cx="343.4" cy="110.6" r="1.5" fill="#1783ff"/>
<circle cx="348.2" cy="110.6" r="1.5" fill="#1783ff"/>
<circle cx="353.0" cy="110.6" r="1.5" fill="#1783ff"/>
<circle cx="357.8" cy="110.6" r="1.5" fill="#1783ff"/>
<circle cx="362.7" cy="110.6" r="1.5" fill="#1783ff"/>
<path fill="none" stroke="#1783ff" stroke-width="1.6" stroke-linejoin="round" d="M341.2,113.6 H365 M342.6,114 L346.2,119 L348.4,119 M363.6,114 L360,119 L357.8,119"/>
<circle cx="351.0" cy="118.4" r="1.5" fill="#1783ff"/>
<circle cx="355.4" cy="118.4" r="1.5" fill="#1783ff"/>
<circle cx="351.0" cy="122.7" r="1.5" fill="#1783ff"/>
<circle cx="355.4" cy="122.7" r="1.5" fill="#1783ff"/>
<path fill="none" stroke="#1783ff" stroke-width="1.7" d="M370.8,105.6 H391.8 M370.8,121.6 H391.8"/>
<path fill="none" stroke="#ea3a56" stroke-width="1" stroke-linejoin="round" opacity="0.9" d="M371,113.8 L373,113.4 L374,114.6 L375,112.4 L376,114.4 L377,113 L378,115 L379,112 L380,115.4 L380.8,108.6 L381.6,119 L382.4,109.6 L383.2,117.6 L384,111.4 L385,115.4 L386,112.6 L387,114.4 L388,113 L389,114.2 L391.4,113.6"/>
<!-- resize grip -->
<g fill="#bcbcbc"><rect x="885" y="543" width="2" height="2"/><rect x="882" y="546" width="2" height="2"/><rect x="885" y="546" width="2" height="2"/><rect x="879" y="549" width="2" height="2"/><rect x="882" y="549" width="2" height="2"/><rect x="885" y="549" width="2" height="2"/></g>
</svg>
<div class="abs grp"></div>
<div class="abs sim" style="left:29px;top:432px;padding:0 2px;background:#f0f0f0">选择区域</div>
<div class="abs sim" style="left:41px;top:456px">开始位置</div>
<div class="abs inp" style="left:102px;top:454px">50<i>.</i>000</div>
<div class="abs sim" style="left:207px;top:456px">秒</div>
<div class="abs sim" style="left:291px;top:456px">结束位置</div>
<div class="abs inp" style="left:351px;top:454px">110<i>.</i>000</div>
<div class="abs sim" style="left:456px;top:456px">秒</div>
<div class="abs sim" style="left:541px;top:456px">持续长度</div>
<div class="abs inp" style="left:602px;top:454px">60<i>.</i>000</div>
<div class="abs sim" style="left:707px;top:456px">秒</div>
<div class="abs sim" style="left:41px;top:482px">播放位置</div>
<div class="abs inp f" style="left:102px;top:480px">50<i>.</i>000</div>
<div class="abs sim" style="left:207px;top:482px">秒</div>
<div class="abs stl"></div>
<div class="abs menu">
<div class="abs gut"></div>
<div class="abs hl"></div>
<div class="abs it" style="top:1px">剪切</div>
<div class="abs it" style="top:23px">复制</div>
<div class="abs it" style="top:45px;color:#8c8c8c">粘贴</div>
<div class="abs it" style="top:67px">从文件中粘贴</div>
<div class="abs it" style="top:89px">插入云端音效库中的音效</div>
<div class="abs it" style="top:111px">从文件中混音</div>
<div class="abs it" style="top:133px">从云端配乐库中混音</div>
</div>
<!-- watermark -->
<svg class="abs" style="left:770px;top:500px" width="126" height="63" viewBox="770 500 126 63">
<g fill="#8c8c8c" stroke="#8c8c8c" stroke-width="0.8" stroke-linejoin="round" opacity="0.93">
<path d="M784.5,513.5 L787.5,512 L792,512.8 L795,514 L799,512.8 L801,516 L802.2,521 L801.4,527 L802.2,532 L800.4,537 L797.6,539.8 L793,539 L789,540.2 L784.6,538.4 L782.2,535 L780.8,529 L781.6,523 L783,518 Z"/>
<path d="M808.5,514 L812,512.4 L816.5,513 L820,512 L823.5,513.4 L825,517 L826.2,522 L825.4,528 L826,533 L824,537.6 L820.6,540 L816,539 L812,540.2 L808,538.6 L805.6,535 L804.8,529 L805.6,523 L806.6,518 Z"/>
<path d="M831,514 L836,512.8 L843,512.2 L848,511.2 L853,512.6 L857.6,514.6 L860,519 L859.6,526 L860.4,532 L857.6,537.6 L852,540.4 L846,540 L842,541.2 L836,540.4 L831.4,538.4 L830,533 L830.6,527 L829.4,521 Z"/>
<path d="M865,514.6 L869,513 L875,512.6 L880,511.2 L886,512.2 L889,514.6 L891.6,519 L893,526 L891.6,533 L888.6,538.6 L884,541.4 L878,540.6 L873,541.8 L867.4,539.6 L864.6,535 L863.2,528 L864.2,521 Z"/>
</g>
<g fill="#f2f2f2" font-family="Liberation Sans, Noto Sans CJK SC, sans-serif">
<text transform="translate(792,535.5) skewX(-3)" text-anchor="middle" font-size="25">K</text>
<text transform="translate(816,535.5) skewX(-3)" text-anchor="middle" font-size="25">K</text>
<text x="845" y="536" text-anchor="middle" font-size="26" font-weight="300">下</text>
<text x="877.5" y="536" text-anchor="middle" font-size="26" font-weight="300">载</text>
</g>
<text x="825.2" y="561" text-anchor="middle" fill="#a0a0a0" font-family="Liberation Sans, sans-serif" font-weight="bold" font-size="14">www.kkx.net</text>
</svg>
</body>
</html>
